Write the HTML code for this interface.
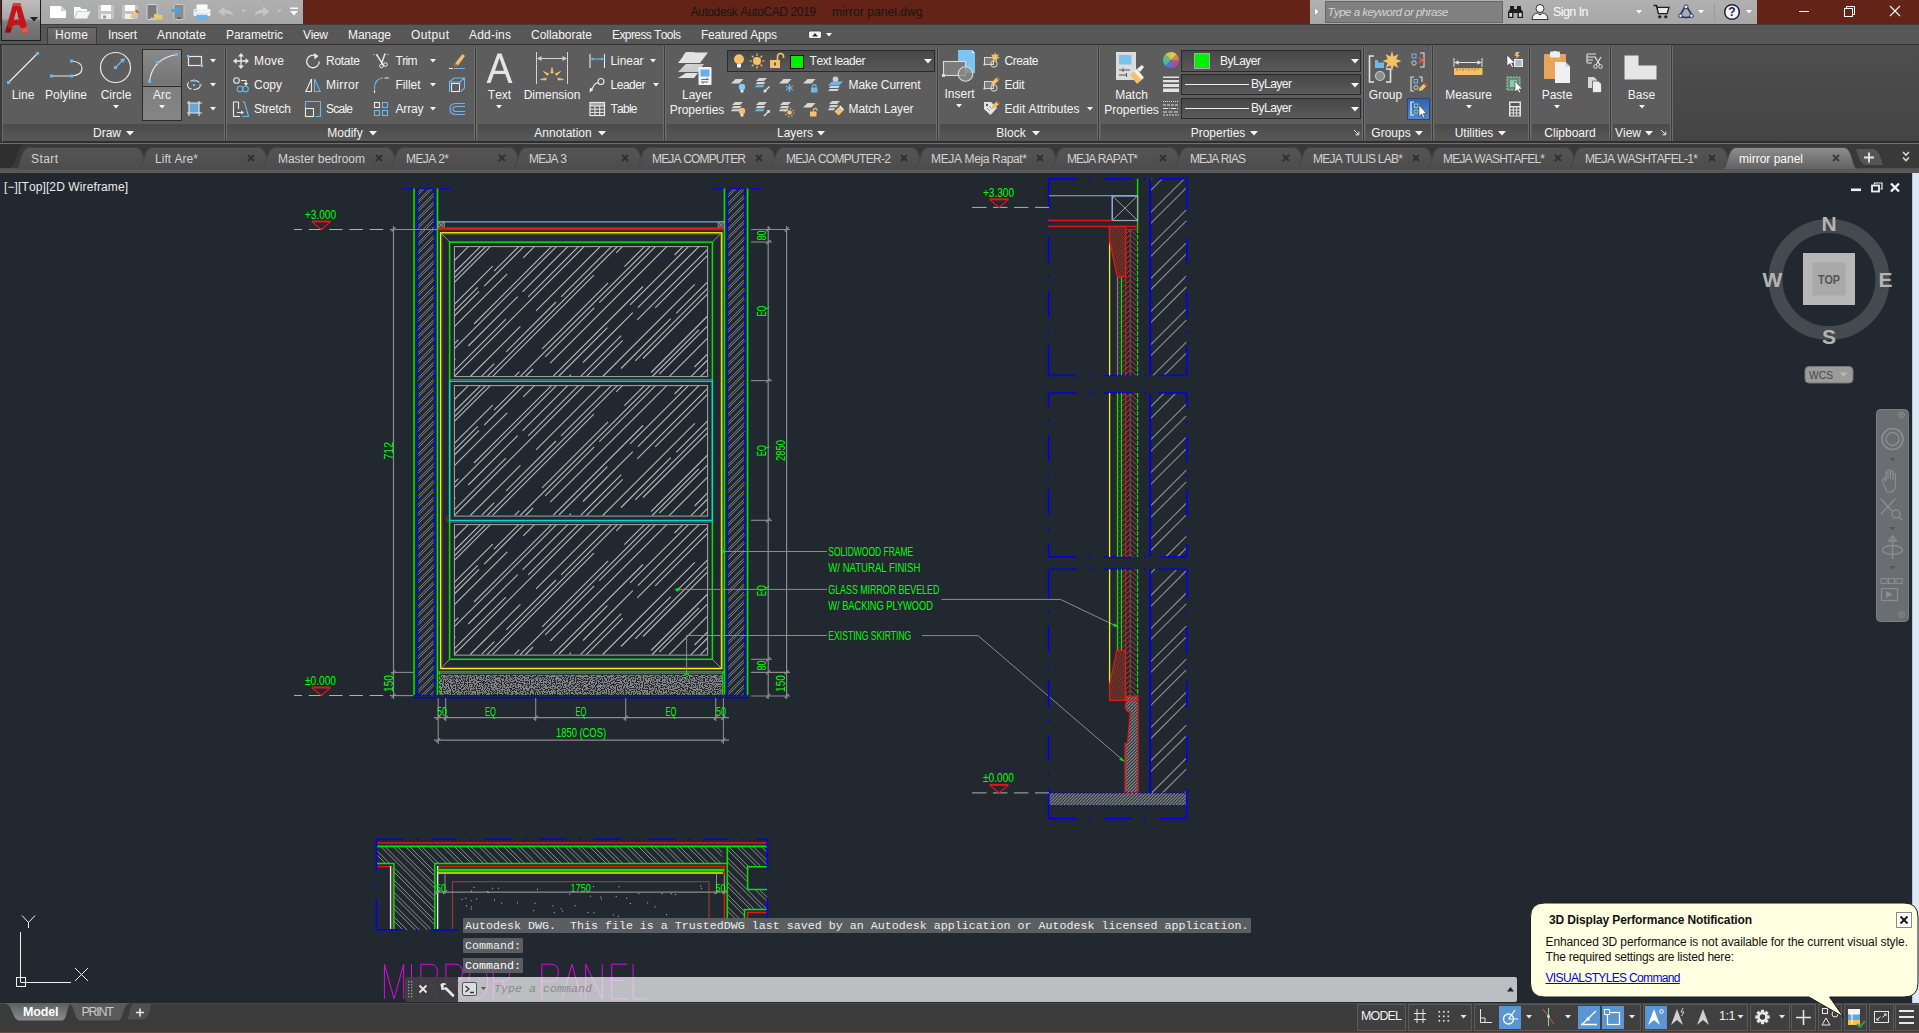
<!DOCTYPE html><html><head><meta charset="utf-8"><title>AutoCAD</title><style>
html,body{margin:0;padding:0;}
body{width:1919px;height:1033px;overflow:hidden;position:relative;background:#212830;font-family:"Liberation Sans",sans-serif;}
div,svg{position:absolute;box-sizing:border-box;}
.t{white-space:nowrap;line-height:1.2;font-kerning:none;}
svg{overflow:visible;}
</style></head><body>
<svg style="left:0;top:0" width="1919" height="1033" viewBox="0 0 1919 1033"><defs>
<pattern id="wh" width="4" height="4" patternUnits="userSpaceOnUse"><path d="M-1 5 L5 -1 M-1 1 L1 -1 M3 5 L5 3" stroke="#8f8f8f" stroke-width="1"/></pattern>
<pattern id="ph" width="4.6" height="4.6" patternUnits="userSpaceOnUse"><path d="M-1 -1 L5.6 5.6 M3.6 -1 L5.6 1 M-1 3.6 L1 5.6" stroke="#909090" stroke-width=".75"/></pattern>
<pattern id="fh" width="3.2" height="3.2" patternUnits="userSpaceOnUse"><path d="M-1 4.2 L4.2 -1 M-1 1 L1 -1 M2.2 4.2 L4.2 2.2" stroke="#9a9a9a" stroke-width="1"/></pattern>
<pattern id="rh" width="2.4" height="2.4" patternUnits="userSpaceOnUse"><rect width="2.4" height="2.4" fill="#44231f"/><path d="M-1 3.4 L3.4 -1 M-1 1 L1 -1 M1.4 3.4 L3.4 1.4" stroke="#a84636" stroke-width=".75"/></pattern>
<pattern id="hb" x="1125.8" y="0" width="5.8" height="3.4" patternUnits="userSpaceOnUse"><path d="M0 5 L2.9 0 L5.8 5 M0 1.6 L2.9 -3.4 L5.8 1.6 M0 8.4 L2.9 3.4 L5.8 8.4" stroke="#a44638" stroke-width=".75" fill="none"/></pattern>
<filter id="nz" x="0" y="0" width="100%" height="100%" color-interpolation-filters="sRGB"><feTurbulence type="fractalNoise" baseFrequency="0.85" numOctaves="1" seed="11"/><feColorMatrix type="matrix" values="0 0 0 0 .13  0 0 0 0 .157  0 0 0 0 .19  14 0 0 0 -6.8"/></filter>
</defs>
<path d="M417.8 192.51L421.31 189M417.8 195.01L423.81 189M417.8 200.95L429.75 189M417.8 203.45L432.25 189M417.8 209.39L434.2 192.99M417.8 211.89L434.2 195.49M417.8 217.83L434.2 201.43M417.8 220.33L434.2 203.93M417.8 226.27L434.2 209.87M417.8 228.77L434.2 212.37M417.8 234.71L434.2 218.31M417.8 237.21L434.2 220.81M417.8 243.15L434.2 226.75M417.8 245.65L434.2 229.25M417.8 251.59L434.2 235.19M417.8 254.09L434.2 237.69M417.8 260.03L434.2 243.63M417.8 262.53L434.2 246.13M417.8 268.47L434.2 252.07M417.8 270.97L434.2 254.57M417.8 276.91L434.2 260.51M417.8 279.41L434.2 263.01M417.8 285.35L434.2 268.95M417.8 287.85L434.2 271.45M417.8 293.79L434.2 277.39M417.8 296.29L434.2 279.89M417.8 302.23L434.2 285.83M417.8 304.73L434.2 288.33M417.8 310.67L434.2 294.27M417.8 313.17L434.2 296.77M417.8 319.11L434.2 302.71M417.8 321.61L434.2 305.21M417.8 327.55L434.2 311.15M417.8 330.05L434.2 313.65M417.8 335.99L434.2 319.59M417.8 338.49L434.2 322.09M417.8 344.43L434.2 328.03M417.8 346.93L434.2 330.53M417.8 352.87L434.2 336.47M417.8 355.37L434.2 338.97M417.8 361.31L434.2 344.91M417.8 363.81L434.2 347.41M417.8 369.75L434.2 353.35M417.8 372.25L434.2 355.85M417.8 378.19L434.2 361.79M417.8 380.69L434.2 364.29M417.8 386.63L434.2 370.23M417.8 389.13L434.2 372.73M417.8 395.07L434.2 378.67M417.8 397.57L434.2 381.17M417.8 403.51L434.2 387.11M417.8 406.01L434.2 389.61M417.8 411.95L434.2 395.55M417.8 414.45L434.2 398.05M417.8 420.39L434.2 403.99M417.8 422.89L434.2 406.49M417.8 428.83L434.2 412.43M417.8 431.33L434.2 414.93M417.8 437.27L434.2 420.87M417.8 439.77L434.2 423.37M417.8 445.71L434.2 429.31M417.8 448.21L434.2 431.81M417.8 454.15L434.2 437.75M417.8 456.65L434.2 440.25M417.8 462.59L434.2 446.19M417.8 465.09L434.2 448.69M417.8 471.03L434.2 454.63M417.8 473.53L434.2 457.13M417.8 479.47L434.2 463.07M417.8 481.97L434.2 465.57M417.8 487.91L434.2 471.51M417.8 490.41L434.2 474.01M417.8 496.35L434.2 479.95M417.8 498.85L434.2 482.45M417.8 504.79L434.2 488.39M417.8 507.29L434.2 490.89M417.8 513.23L434.2 496.83M417.8 515.73L434.2 499.33M417.8 521.67L434.2 505.27M417.8 524.17L434.2 507.77M417.8 530.11L434.2 513.71M417.8 532.61L434.2 516.21M417.8 538.55L434.2 522.15M417.8 541.05L434.2 524.65M417.8 546.99L434.2 530.59M417.8 549.49L434.2 533.09M417.8 555.43L434.2 539.03M417.8 557.93L434.2 541.53M417.8 563.87L434.2 547.47M417.8 566.37L434.2 549.97M417.8 572.31L434.2 555.91M417.8 574.81L434.2 558.41M417.8 580.75L434.2 564.35M417.8 583.25L434.2 566.85M417.8 589.19L434.2 572.79M417.8 591.69L434.2 575.29M417.8 597.63L434.2 581.23M417.8 600.13L434.2 583.73M417.8 606.07L434.2 589.67M417.8 608.57L434.2 592.17M417.8 614.51L434.2 598.11M417.8 617.01L434.2 600.61M417.8 622.95L434.2 606.55M417.8 625.45L434.2 609.05M417.8 631.39L434.2 614.99M417.8 633.89L434.2 617.49M417.8 639.83L434.2 623.43M417.8 642.33L434.2 625.93M417.8 648.27L434.2 631.87M417.8 650.77L434.2 634.37M417.8 656.71L434.2 640.31M417.8 659.21L434.2 642.81M417.8 665.15L434.2 648.75M417.8 667.65L434.2 651.25M417.8 673.59L434.2 657.19M417.8 676.09L434.2 659.69M417.8 682.03L434.2 665.63M417.8 684.53L434.2 668.13M417.8 690.47L434.2 674.07M417.8 692.97L434.2 676.57M420.71 696L434.2 682.51M423.21 696L434.2 685.01M429.15 696L434.2 690.95M431.65 696L434.2 693.45" stroke="#8c8c8c" stroke-width=".95" fill="none"/>
<path d="M414 188.5 L414 696" stroke="#00e400" stroke-width="1.6" />
<path d="M437.5 188.5 L437.5 696" stroke="#00e400" stroke-width="1.6" />
<path d="M417.5 189 V696 M434.5 189 V696" stroke="#0000ee" stroke-width="1.5" stroke-dasharray="7.5 .9 .9 .9"/>
<path d="M727.8 194.79L733.59 189M727.8 197.29L736.09 189M727.8 203.23L742.03 189M727.8 205.73L744.4 189.13M727.8 211.67L744.4 195.07M727.8 214.17L744.4 197.57M727.8 220.11L744.4 203.51M727.8 222.61L744.4 206.01M727.8 228.55L744.4 211.95M727.8 231.05L744.4 214.45M727.8 236.99L744.4 220.39M727.8 239.49L744.4 222.89M727.8 245.43L744.4 228.83M727.8 247.93L744.4 231.33M727.8 253.87L744.4 237.27M727.8 256.37L744.4 239.77M727.8 262.31L744.4 245.71M727.8 264.81L744.4 248.21M727.8 270.75L744.4 254.15M727.8 273.25L744.4 256.65M727.8 279.19L744.4 262.59M727.8 281.69L744.4 265.09M727.8 287.63L744.4 271.03M727.8 290.13L744.4 273.53M727.8 296.07L744.4 279.47M727.8 298.57L744.4 281.97M727.8 304.51L744.4 287.91M727.8 307.01L744.4 290.41M727.8 312.95L744.4 296.35M727.8 315.45L744.4 298.85M727.8 321.39L744.4 304.79M727.8 323.89L744.4 307.29M727.8 329.83L744.4 313.23M727.8 332.33L744.4 315.73M727.8 338.27L744.4 321.67M727.8 340.77L744.4 324.17M727.8 346.71L744.4 330.11M727.8 349.21L744.4 332.61M727.8 355.15L744.4 338.55M727.8 357.65L744.4 341.05M727.8 363.59L744.4 346.99M727.8 366.09L744.4 349.49M727.8 372.03L744.4 355.43M727.8 374.53L744.4 357.93M727.8 380.47L744.4 363.87M727.8 382.97L744.4 366.37M727.8 388.91L744.4 372.31M727.8 391.41L744.4 374.81M727.8 397.35L744.4 380.75M727.8 399.85L744.4 383.25M727.8 405.79L744.4 389.19M727.8 408.29L744.4 391.69M727.8 414.23L744.4 397.63M727.8 416.73L744.4 400.13M727.8 422.67L744.4 406.07M727.8 425.17L744.4 408.57M727.8 431.11L744.4 414.51M727.8 433.61L744.4 417.01M727.8 439.55L744.4 422.95M727.8 442.05L744.4 425.45M727.8 447.99L744.4 431.39M727.8 450.49L744.4 433.89M727.8 456.43L744.4 439.83M727.8 458.93L744.4 442.33M727.8 464.87L744.4 448.27M727.8 467.37L744.4 450.77M727.8 473.31L744.4 456.71M727.8 475.81L744.4 459.21M727.8 481.75L744.4 465.15M727.8 484.25L744.4 467.65M727.8 490.19L744.4 473.59M727.8 492.69L744.4 476.09M727.8 498.63L744.4 482.03M727.8 501.13L744.4 484.53M727.8 507.07L744.4 490.47M727.8 509.57L744.4 492.97M727.8 515.51L744.4 498.91M727.8 518.01L744.4 501.41M727.8 523.95L744.4 507.35M727.8 526.45L744.4 509.85M727.8 532.39L744.4 515.79M727.8 534.89L744.4 518.29M727.8 540.83L744.4 524.23M727.8 543.33L744.4 526.73M727.8 549.27L744.4 532.67M727.8 551.77L744.4 535.17M727.8 557.71L744.4 541.11M727.8 560.21L744.4 543.61M727.8 566.15L744.4 549.55M727.8 568.65L744.4 552.05M727.8 574.59L744.4 557.99M727.8 577.09L744.4 560.49M727.8 583.03L744.4 566.43M727.8 585.53L744.4 568.93M727.8 591.47L744.4 574.87M727.8 593.97L744.4 577.37M727.8 599.91L744.4 583.31M727.8 602.41L744.4 585.81M727.8 608.35L744.4 591.75M727.8 610.85L744.4 594.25M727.8 616.79L744.4 600.19M727.8 619.29L744.4 602.69M727.8 625.23L744.4 608.63M727.8 627.73L744.4 611.13M727.8 633.67L744.4 617.07M727.8 636.17L744.4 619.57M727.8 642.11L744.4 625.51M727.8 644.61L744.4 628.01M727.8 650.55L744.4 633.95M727.8 653.05L744.4 636.45M727.8 658.99L744.4 642.39M727.8 661.49L744.4 644.89M727.8 667.43L744.4 650.83M727.8 669.93L744.4 653.33M727.8 675.87L744.4 659.27M727.8 678.37L744.4 661.77M727.8 684.31L744.4 667.71M727.8 686.81L744.4 670.21M727.8 692.75L744.4 676.15M727.8 695.25L744.4 678.65M732.99 696L744.4 684.59M735.49 696L744.4 687.09M741.43 696L744.4 693.03M743.93 696L744.4 695.53" stroke="#8c8c8c" stroke-width=".95" fill="none"/>
<path d="M724.4 188.5 L724.4 696" stroke="#00e400" stroke-width="1.6" />
<path d="M747.6 188.5 L747.6 696" stroke="#00e400" stroke-width="1.6" />
<path d="M727.5 189 V696 M744.7 189 V696" stroke="#0000ee" stroke-width="1.5" stroke-dasharray="7.5 .9 .9 .9"/>
<path d="M403 188.6 L413 188.6" stroke="#0000ee" stroke-width="1.4" stroke-dasharray="3 .6"/>
<path d="M421 188.6 L433 188.6" stroke="#0000ee" stroke-width="1.4" stroke-dasharray="3 .6"/>
<path d="M440 188.6 L451 188.6" stroke="#0000ee" stroke-width="1.4" stroke-dasharray="3 .6"/>
<path d="M713 188.6 L723 188.6" stroke="#0000ee" stroke-width="1.4" stroke-dasharray="3 .6"/>
<path d="M730 188.6 L743 188.6" stroke="#0000ee" stroke-width="1.4" stroke-dasharray="3 .6"/>
<path d="M750 188.6 L761 188.6" stroke="#0000ee" stroke-width="1.4" stroke-dasharray="3 .6"/>
<path d="M413.5 695.4 L748.5 695.4" stroke="#0000ee" stroke-width="1.4" stroke-dasharray="3.5 1.2"/>
<path d="M413.5 697.8 L748.5 697.8" stroke="#0000ee" stroke-width="1.6" />
<path d="M437.5 221.8 L724.5 221.8" stroke="#7ea6d8" stroke-width="1.2" />
<rect x="438" y="222" width="6.3" height="6" fill="#4a4f55" stroke="#a0a0a0" stroke-width=".8"/><path d="M438 222 l6.3 6 M444.3 222 l-6.3 6" stroke="#a0a0a0" stroke-width=".7"/>
<rect x="718.2" y="222" width="6.3" height="6" fill="#4a4f55" stroke="#a0a0a0" stroke-width=".8"/><path d="M718.2 222 l6.3 6 M724.5 222 l-6.3 6" stroke="#a0a0a0" stroke-width=".7"/>
<rect x="438.5" y="227.2" width="285" height="3" fill="#e61414"/>
<rect x="440.6" y="232.8" width="281.2" height="435.8" fill="none" stroke="#f4f400" stroke-width="1.4"/>
<rect x="442" y="234.2" width="278.4" height="433" fill="none" stroke="#6a6a6a" stroke-width=".6"/>
<path d="M441 233 L449.6 242" stroke="#9a9a9a" stroke-width="0.9" />
<path d="M721.5 233 L712.4 242" stroke="#9a9a9a" stroke-width="0.9" />
<path d="M441 668.5 L449.6 659.3" stroke="#9a9a9a" stroke-width="0.9" />
<path d="M721.5 668.5 L712.4 659.3" stroke="#9a9a9a" stroke-width="0.9" />
<rect x="449.6" y="242.1" width="262.8" height="417.2" fill="none" stroke="#00e400" stroke-width="1.5"/>
<rect x="449.6" y="381.3" width="262.8" height="139.1" fill="none" stroke="#00dcdc" stroke-width="1.3"/>
<path d="M450 379.6 L712 379.6" stroke="#8a8a8a" stroke-width="0.8" />
<path d="M450 522 L712 522" stroke="#8a8a8a" stroke-width="0.8" />
<g id="glass" transform="translate(454.4 246.6)"><path d="M0 13.9L13.9 0M0 25.9L25.9 0M0 31.2L31.2 0M0 35.8L35.8 0M0 57.8L38.3 19.5M0 64.2L23.4 40.8M39.6 24.6L64.2 0M0 69.4L24.7 44.7M29.8 39.6L69.4 0M0 80L52.8 27.2M68.8 11.2L80 0M0 97L4 93M19.6 77.4L97 0M0 102L102 0M0 113.3L1 112.3M13.9 99.4L63.3 50M68.1 45.2L113.3 0M0 124L51.5 72.5M73.8 50.2L124 0M0 129.7L129.7 0M15.9 129.9L66 79.8M81.6 64.2L145.8 0M27.4 129.6L39.9 117.1M51.8 105.2L101.6 55.4M106.7 50.3L157 0M32.8 130L162.8 0M38.3 129.7L139.5 28.5M161.8 6.2L168 0M60.3 129.7L65 125M87.7 102.3L153.7 36.3M170 20L190 0M65.7 130L195.7 0M71.1 129.9L78.6 122.4M90.8 110.2L139.8 61.2M144.9 56.1L201 0M95.8 116.5L212.3 0M98.9 129.6L188.6 39.9M220.1 8.4L228.5 0M104.6 129.4L153 81M175.7 58.3L234 0M115 129.5L116.5 128M128.6 115.9L178.4 66.1M183.5 61L244.5 0M126.3 129.7L166.9 89.1M182.8 73.2L253.2 2.8M132 130L168.3 93.7M200.8 61.2L253.2 8.8M148.3 129.9L240.4 37.8M166.6 121.9L216.4 72.1M221.8 66.7L253.2 35.3M180.8 114.2L253.2 41.8M188.6 111.9L253.2 47.3M196.7 125.9L253.2 69.4M197.8 129.9L244.5 83.2M204.9 127.6L253.2 79.3M214.8 130L253.2 91.6M240.1 120.4L253.2 107.3M236.6 130L253.2 113.4M246 130L253.2 122.8" stroke="#b6b6b6" stroke-width="1.15" fill="none"/><rect x="0" y="0" width="253.2" height="130" fill="none" stroke="#a8a8a8" stroke-width="1"/></g>
<g transform="translate(454.4 385.6)"><path d="M0 13.9L13.9 0M0 25.9L25.9 0M0 31.2L31.2 0M0 35.8L35.8 0M0 57.8L38.3 19.5M0 64.2L23.4 40.8M39.6 24.6L64.2 0M0 69.4L24.7 44.7M29.8 39.6L69.4 0M0 80L52.8 27.2M68.8 11.2L80 0M0 97L4 93M19.6 77.4L97 0M0 102L102 0M0 113.3L1 112.3M13.9 99.4L63.3 50M68.1 45.2L113.3 0M0 124L51.5 72.5M73.8 50.2L124 0M0 129.7L129.7 0M15.9 129.9L66 79.8M81.6 64.2L145.8 0M27.4 129.6L39.9 117.1M51.8 105.2L101.6 55.4M106.7 50.3L157 0M32.8 130L162.8 0M38.3 129.7L139.5 28.5M161.8 6.2L168 0M60.3 129.7L65 125M87.7 102.3L153.7 36.3M170 20L190 0M65.7 130L195.7 0M71.1 129.9L78.6 122.4M90.8 110.2L139.8 61.2M144.9 56.1L201 0M95.8 116.5L212.3 0M98.9 129.6L188.6 39.9M220.1 8.4L228.5 0M104.6 129.4L153 81M175.7 58.3L234 0M115 129.5L116.5 128M128.6 115.9L178.4 66.1M183.5 61L244.5 0M126.3 129.7L166.9 89.1M182.8 73.2L253.2 2.8M132 130L168.3 93.7M200.8 61.2L253.2 8.8M148.3 129.9L240.4 37.8M166.6 121.9L216.4 72.1M221.8 66.7L253.2 35.3M180.8 114.2L253.2 41.8M188.6 111.9L253.2 47.3M196.7 125.9L253.2 69.4M197.8 129.9L244.5 83.2M204.9 127.6L253.2 79.3M214.8 130L253.2 91.6M240.1 120.4L253.2 107.3M236.6 130L253.2 113.4M246 130L253.2 122.8" stroke="#b6b6b6" stroke-width="1.15" fill="none"/><rect x="0" y="0" width="253.2" height="130.5" fill="none" stroke="#a8a8a8" stroke-width="1"/></g>
<g transform="translate(454.4 524.6)"><path d="M0 13.9L13.9 0M0 25.9L25.9 0M0 31.2L31.2 0M0 35.8L35.8 0M0 57.8L38.3 19.5M0 64.2L23.4 40.8M39.6 24.6L64.2 0M0 69.4L24.7 44.7M29.8 39.6L69.4 0M0 80L52.8 27.2M68.8 11.2L80 0M0 97L4 93M19.6 77.4L97 0M0 102L102 0M0 113.3L1 112.3M13.9 99.4L63.3 50M68.1 45.2L113.3 0M0 124L51.5 72.5M73.8 50.2L124 0M0 129.7L129.7 0M15.9 129.9L66 79.8M81.6 64.2L145.8 0M27.4 129.6L39.9 117.1M51.8 105.2L101.6 55.4M106.7 50.3L157 0M32.8 130L162.8 0M38.3 129.7L139.5 28.5M161.8 6.2L168 0M60.3 129.7L65 125M87.7 102.3L153.7 36.3M170 20L190 0M65.7 130L195.7 0M71.1 129.9L78.6 122.4M90.8 110.2L139.8 61.2M144.9 56.1L201 0M95.8 116.5L212.3 0M98.9 129.6L188.6 39.9M220.1 8.4L228.5 0M104.6 129.4L153 81M175.7 58.3L234 0M115 129.5L116.5 128M128.6 115.9L178.4 66.1M183.5 61L244.5 0M126.3 129.7L166.9 89.1M182.8 73.2L253.2 2.8M132 130L168.3 93.7M200.8 61.2L253.2 8.8M148.3 129.9L240.4 37.8M166.6 121.9L216.4 72.1M221.8 66.7L253.2 35.3M180.8 114.2L253.2 41.8M188.6 111.9L253.2 47.3M196.7 125.9L253.2 69.4M197.8 129.9L244.5 83.2M204.9 127.6L253.2 79.3M214.8 130L253.2 91.6M240.1 120.4L253.2 107.3M236.6 130L253.2 113.4M246 130L253.2 122.8" stroke="#b6b6b6" stroke-width="1.15" fill="none"/><rect x="0" y="0" width="253.2" height="130.5" fill="none" stroke="#a8a8a8" stroke-width="1"/></g>
<rect x="440" y="675.5" width="283" height="19.3" fill="#858585"/>
<rect x="440" y="675.5" width="283" height="19.3" filter="url(#nz)"/>
<path d="M438 671.7 L724 671.7" stroke="#00e400" stroke-width="1.1" />
<path d="M438 673.1 L724 673.1" stroke="#8a8a8a" stroke-width="1" />
<path d="M441 675.4 L723 675.4" stroke="#00e400" stroke-width="1" stroke-dasharray="4 2.5"/>
<path d="M439.6 672 V695 M722.6 672 V695" stroke="#00e400" stroke-width="1.2" stroke-dasharray="3 1.5"/>
<path d="M449 515 L446 519 L449 523" stroke="#c03030" stroke-width=".8" fill="none"/>
<path d="M294 229.5 L393 229.5" stroke="#b0b0b0" stroke-width="1" stroke-dasharray="13.5 6.8" stroke-dashoffset="5.5"/>
<path d="M311.7 221.5 H330.7" stroke="#e61414" stroke-width="2"/><path d="M312.2 222.0 L321.2 229.5 L330.2 222.0" stroke="#e61414" stroke-width="1.2" fill="none"/><text x="305" y="219" font-size="12.57" fill="#00ff00" text-anchor="start" textLength="31" lengthAdjust="spacingAndGlyphs" font-family="Liberation Sans">+3.000</text>
<path d="M294 695.5 L413 695.5" stroke="#b0b0b0" stroke-width="1" stroke-dasharray="13.5 6.8" stroke-dashoffset="5.5"/>
<path d="M311.7 687.5 H330.7" stroke="#e61414" stroke-width="2"/><path d="M312.2 688.0 L321.2 695.5 L330.2 688.0" stroke="#e61414" stroke-width="1.2" fill="none"/><text x="305" y="685" font-size="12.57" fill="#00ff00" text-anchor="start" textLength="31" lengthAdjust="spacingAndGlyphs" font-family="Liberation Sans">&#177;0.000</text>
<path d="M393.5 226 L393.5 699" stroke="#8c8c8c" stroke-width="1.2" />
<path d="M391 229.5 L437 229.5" stroke="#8c8c8c" stroke-width="1.1" />
<path d="M391 672.4 L413 672.4" stroke="#8c8c8c" stroke-width="1.1" />
<path d="M391 695.6 L413 695.6" stroke="#8c8c8c" stroke-width="1.1" />
<path d="M391.5 231.5 L395.5 227.5" stroke="#8c8c8c" stroke-width="1.3" />
<path d="M391.5 674.4 L395.5 670.4" stroke="#8c8c8c" stroke-width="1.3" />
<path d="M391.5 697.6 L395.5 693.6" stroke="#8c8c8c" stroke-width="1.3" />
<text x="392.7" y="459.5" font-size="12.57" fill="#00ff00" text-anchor="start" textLength="17.5" lengthAdjust="spacingAndGlyphs" font-family="Liberation Sans" transform="rotate(-90 392.7 459.5)">712</text>
<text x="392.7" y="692" font-size="12.57" fill="#00ff00" text-anchor="start" textLength="17" lengthAdjust="spacingAndGlyphs" font-family="Liberation Sans" transform="rotate(-90 392.7 692)">150</text>
<path d="M768.2 226 L768.2 699" stroke="#8c8c8c" stroke-width="1.2" />
<path d="M786.6 226 L786.6 699" stroke="#8c8c8c" stroke-width="1.2" />
<path d="M751 229.5 L790 229.5" stroke="#8c8c8c" stroke-width="1.1" />
<path d="M751 696 L790 696" stroke="#8c8c8c" stroke-width="1.1" />
<path d="M751 672.4 L790 672.4" stroke="#8c8c8c" stroke-width="1.1" />
<path d="M751 242 L772 242" stroke="#8c8c8c" stroke-width="1.1" />
<path d="M751 380.6 L772 380.6" stroke="#8c8c8c" stroke-width="1.1" />
<path d="M751 520.3 L772 520.3" stroke="#8c8c8c" stroke-width="1.1" />
<path d="M751 659.3 L772 659.3" stroke="#8c8c8c" stroke-width="1.1" />
<path d="M766.2 231.5 L770.2 227.5" stroke="#8c8c8c" stroke-width="1.3" />
<path d="M766.2 244 L770.2 240" stroke="#8c8c8c" stroke-width="1.3" />
<path d="M766.2 382.6 L770.2 378.6" stroke="#8c8c8c" stroke-width="1.3" />
<path d="M766.2 522.3 L770.2 518.3" stroke="#8c8c8c" stroke-width="1.3" />
<path d="M766.2 661.3 L770.2 657.3" stroke="#8c8c8c" stroke-width="1.3" />
<path d="M766.2 674.4 L770.2 670.4" stroke="#8c8c8c" stroke-width="1.3" />
<path d="M766.2 698 L770.2 694" stroke="#8c8c8c" stroke-width="1.3" />
<path d="M784.6 231.5 L788.6 227.5" stroke="#8c8c8c" stroke-width="1.3" />
<path d="M784.6 674.4 L788.6 670.4" stroke="#8c8c8c" stroke-width="1.3" />
<path d="M784.6 698 L788.6 694" stroke="#8c8c8c" stroke-width="1.3" />
<text x="765.8" y="240.5" font-size="12.57" fill="#00ff00" text-anchor="start" textLength="10" lengthAdjust="spacingAndGlyphs" font-family="Liberation Sans" transform="rotate(-90 765.8 240.5)">80</text>
<text x="765.8" y="316.5" font-size="12.57" fill="#00ff00" text-anchor="start" textLength="11" lengthAdjust="spacingAndGlyphs" font-family="Liberation Sans" transform="rotate(-90 765.8 316.5)">EQ</text>
<text x="765.8" y="456" font-size="12.57" fill="#00ff00" text-anchor="start" textLength="11" lengthAdjust="spacingAndGlyphs" font-family="Liberation Sans" transform="rotate(-90 765.8 456)">EQ</text>
<text x="765.8" y="596" font-size="12.57" fill="#00ff00" text-anchor="start" textLength="11" lengthAdjust="spacingAndGlyphs" font-family="Liberation Sans" transform="rotate(-90 765.8 596)">EQ</text>
<text x="765.8" y="670.5" font-size="12.57" fill="#00ff00" text-anchor="start" textLength="10" lengthAdjust="spacingAndGlyphs" font-family="Liberation Sans" transform="rotate(-90 765.8 670.5)">80</text>
<text x="785" y="461" font-size="12.57" fill="#00ff00" text-anchor="start" textLength="21" lengthAdjust="spacingAndGlyphs" font-family="Liberation Sans" transform="rotate(-90 785 461)">2850</text>
<text x="785" y="692" font-size="12.57" fill="#00ff00" text-anchor="start" textLength="17" lengthAdjust="spacingAndGlyphs" font-family="Liberation Sans" transform="rotate(-90 785 692)">150</text>
<path d="M434 717.7 L729 717.7" stroke="#8c8c8c" stroke-width="1.2" />
<path d="M434 740.2 L729 740.2" stroke="#8c8c8c" stroke-width="1.2" />
<path d="M438.2 698 L438.2 744" stroke="#8c8c8c" stroke-width="1.1" />
<path d="M723.4 698 L723.4 744" stroke="#8c8c8c" stroke-width="1.1" />
<path d="M445.7 698 L445.7 721" stroke="#8c8c8c" stroke-width="1.1" />
<path d="M535.7 698 L535.7 721" stroke="#8c8c8c" stroke-width="1.1" />
<path d="M625.7 698 L625.7 721" stroke="#8c8c8c" stroke-width="1.1" />
<path d="M715.7 698 L715.7 721" stroke="#8c8c8c" stroke-width="1.1" />
<path d="M436.2 719.7 L440.2 715.7" stroke="#8c8c8c" stroke-width="1.3" />
<path d="M443.7 719.7 L447.7 715.7" stroke="#8c8c8c" stroke-width="1.3" />
<path d="M533.7 719.7 L537.7 715.7" stroke="#8c8c8c" stroke-width="1.3" />
<path d="M623.7 719.7 L627.7 715.7" stroke="#8c8c8c" stroke-width="1.3" />
<path d="M713.7 719.7 L717.7 715.7" stroke="#8c8c8c" stroke-width="1.3" />
<path d="M721.4 719.7 L725.4 715.7" stroke="#8c8c8c" stroke-width="1.3" />
<path d="M436.2 742.2 L440.2 738.2" stroke="#8c8c8c" stroke-width="1.3" />
<path d="M721.4 742.2 L725.4 738.2" stroke="#8c8c8c" stroke-width="1.3" />
<text x="437" y="716" font-size="12.57" fill="#00ff00" text-anchor="start" textLength="10" lengthAdjust="spacingAndGlyphs" font-family="Liberation Sans">50</text>
<text x="716" y="716" font-size="12.57" fill="#00ff00" text-anchor="start" textLength="10" lengthAdjust="spacingAndGlyphs" font-family="Liberation Sans">50</text>
<text x="485" y="716" font-size="12.57" fill="#00ff00" text-anchor="start" textLength="11" lengthAdjust="spacingAndGlyphs" font-family="Liberation Sans">EQ</text>
<text x="575.5" y="716" font-size="12.57" fill="#00ff00" text-anchor="start" textLength="11" lengthAdjust="spacingAndGlyphs" font-family="Liberation Sans">EQ</text>
<text x="665.5" y="716" font-size="12.57" fill="#00ff00" text-anchor="start" textLength="11" lengthAdjust="spacingAndGlyphs" font-family="Liberation Sans">EQ</text>
<text x="556" y="737" font-size="12.57" fill="#00ff00" text-anchor="start" textLength="50" lengthAdjust="spacingAndGlyphs" font-family="Liberation Sans">1850 (COS)</text>
<path d="M723.5 551.5 L827 551.5" stroke="#8c8c8c" stroke-width="1" />
<circle cx="723.5" cy="551.5" r="1.6" fill="#00e400"/>
<path d="M676 589.4 L827 589.4" stroke="#8c8c8c" stroke-width="1" />
<path d="M674 589.4 L679.5 587.6 V591.2 Z" fill="#00e400"/>
<path d="M686.6 674 L686.6 635.5 L827 635.5" stroke="#8c8c8c" stroke-width="1" fill="none" />
<path d="M684 674.2 H689" stroke="#00e400" stroke-width="1.4"/>
<path d="M941.5 599.4 L1060.5 599.4 L1118 627" stroke="#8c8c8c" stroke-width="1" fill="none" />
<path d="M1119 627.5 L1112.8 626.3 L1114.3 623.3 Z" fill="#00e400"/>
<path d="M922 635.6 L978 635.6 L1124.5 761.5" stroke="#8c8c8c" stroke-width="1" fill="none" />
<path d="M1125.2 762 L1119.2 759.8 L1121.4 757.2 Z" fill="#00e400"/>
<text x="828.3" y="556" font-size="12.57" fill="#00ff00" text-anchor="start" textLength="85" lengthAdjust="spacingAndGlyphs" font-family="Liberation Sans">SOLIDWOOD FRAME</text>
<text x="828.3" y="572" font-size="12.57" fill="#00ff00" text-anchor="start" textLength="92" lengthAdjust="spacingAndGlyphs" font-family="Liberation Sans">W/ NATURAL FINISH</text>
<text x="828.3" y="594" font-size="12.57" fill="#00ff00" text-anchor="start" textLength="111" lengthAdjust="spacingAndGlyphs" font-family="Liberation Sans">GLASS MIRROR BEVELED</text>
<text x="828.3" y="610" font-size="12.57" fill="#00ff00" text-anchor="start" textLength="104.5" lengthAdjust="spacingAndGlyphs" font-family="Liberation Sans">W/ BACKING PLYWOOD</text>
<text x="828.3" y="640" font-size="12.57" fill="#00ff00" text-anchor="start" textLength="83" lengthAdjust="spacingAndGlyphs" font-family="Liberation Sans">EXISTING SKIRTING</text>
<path d="M1150.5 179.6L1151.4 178.7M1150.5 190.6L1162.4 178.7M1150.5 212.65L1184.45 178.7M1150.5 223.65L1186.3 187.85M1150.5 245.7L1186.3 209.9M1150.5 256.7L1186.3 220.9M1150.5 278.75L1186.3 242.95M1150.5 289.75L1186.3 253.95M1150.5 311.8L1186.3 276M1150.5 322.8L1186.3 287M1150.5 344.85L1186.3 309.05M1150.5 355.85L1186.3 320.05M1153 375.4L1186.3 342.1M1164 375.4L1186.3 353.1M1186.05 375.4L1186.3 375.15M1150.5 406.85L1164.35 393M1150.5 418.55L1176.05 393M1150.5 439.9L1186.3 404.1M1150.5 451.6L1186.3 415.8M1150.5 472.95L1186.3 437.15M1150.5 484.65L1186.3 448.85M1150.5 506L1186.3 470.2M1150.5 517.7L1186.3 481.9M1150.5 539.05L1186.3 503.25M1150.5 550.75L1186.3 514.95M1165.6 557L1186.3 536.3M1177.3 557L1186.3 548M1150.5 573.5L1154.8 569.2M1150.5 595.75L1177.05 569.2M1150.5 606.55L1186.3 570.75M1150.5 628.8L1186.3 593M1150.5 639.6L1186.3 603.8M1150.5 661.85L1186.3 626.05M1150.5 672.65L1186.3 636.85M1150.5 694.9L1186.3 659.1M1150.5 705.7L1186.3 669.9M1150.5 727.95L1186.3 692.15M1150.5 738.75L1186.3 702.95M1150.5 761L1186.3 725.2M1150.5 771.8L1186.3 736M1151.55 793L1186.3 758.25M1162.35 793L1186.3 769.05M1184.6 793L1186.3 791.3" stroke="#8e8e8e" stroke-width="1.1" fill="none"/>

<path d="M1048.7 178.7 L1076.8 178.7" stroke="#0000ee" stroke-width="1.6" /><rect x="1089.8" y="177.79999999999998" width="1.8" height="1.8" fill="#0000ee"/><path d="M1104.2 178.7 L1131.6 178.7" stroke="#0000ee" stroke-width="1.6" /><rect x="1144" y="177.79999999999998" width="1.8" height="1.8" fill="#0000ee"/><path d="M1158.7 178.7 L1186.7 178.7" stroke="#0000ee" stroke-width="1.6" />
<path d="M1048.7 375.4 L1076.8 375.4" stroke="#0000ee" stroke-width="1.6" /><rect x="1089.8" y="374.5" width="1.8" height="1.8" fill="#0000ee"/><path d="M1104.2 375.4 L1131.6 375.4" stroke="#0000ee" stroke-width="1.6" /><rect x="1144" y="374.5" width="1.8" height="1.8" fill="#0000ee"/><path d="M1158.7 375.4 L1186.7 375.4" stroke="#0000ee" stroke-width="1.6" />
<path d="M1048.7 178.7 L1048.7 208.7" stroke="#0000ee" stroke-width="1.6" /><rect x="1047.8" y="221.7" width="1.8" height="1.8" fill="#0000ee"/><path d="M1048.7 236.4 L1048.7 262.9" stroke="#0000ee" stroke-width="1.6" /><rect x="1047.8" y="275.9" width="1.8" height="1.8" fill="#0000ee"/><path d="M1048.7 290.6 L1048.7 317.1" stroke="#0000ee" stroke-width="1.6" /><rect x="1047.8" y="330.1" width="1.8" height="1.8" fill="#0000ee"/><path d="M1048.7 344.8 L1048.7 375.4" stroke="#0000ee" stroke-width="1.6" />
<path d="M1186.7 178.7 L1186.7 209.7" stroke="#0000ee" stroke-width="1.6" /><rect x="1185.8" y="222.7" width="1.8" height="1.8" fill="#0000ee"/><path d="M1186.7 237.4 L1186.7 263.9" stroke="#0000ee" stroke-width="1.6" /><rect x="1185.8" y="276.9" width="1.8" height="1.8" fill="#0000ee"/><path d="M1186.7 291.6 L1186.7 318.1" stroke="#0000ee" stroke-width="1.6" /><rect x="1185.8" y="331.1" width="1.8" height="1.8" fill="#0000ee"/><path d="M1186.7 345.8 L1186.7 375.4" stroke="#0000ee" stroke-width="1.6" />
<path d="M1150.2 178.7 L1150.2 375.4" stroke="#0000ee" stroke-width="1.8" />

<path d="M1048.7 393 L1076.8 393" stroke="#0000ee" stroke-width="1.6" /><rect x="1089.8" y="392.1" width="1.8" height="1.8" fill="#0000ee"/><path d="M1104.2 393 L1131.6 393" stroke="#0000ee" stroke-width="1.6" /><rect x="1144" y="392.1" width="1.8" height="1.8" fill="#0000ee"/><path d="M1158.7 393 L1186.7 393" stroke="#0000ee" stroke-width="1.6" />
<path d="M1048.7 557 L1076.8 557" stroke="#0000ee" stroke-width="1.6" /><rect x="1089.8" y="556.1" width="1.8" height="1.8" fill="#0000ee"/><path d="M1104.2 557 L1131.6 557" stroke="#0000ee" stroke-width="1.6" /><rect x="1144" y="556.1" width="1.8" height="1.8" fill="#0000ee"/><path d="M1158.7 557 L1186.7 557" stroke="#0000ee" stroke-width="1.6" />
<path d="M1048.7 393 L1048.7 406.9" stroke="#0000ee" stroke-width="1.6" /><rect x="1047.8" y="419.9" width="1.8" height="1.8" fill="#0000ee"/><path d="M1048.7 434.6 L1048.7 461.1" stroke="#0000ee" stroke-width="1.6" /><rect x="1047.8" y="474.1" width="1.8" height="1.8" fill="#0000ee"/><path d="M1048.7 488.8 L1048.7 515.3" stroke="#0000ee" stroke-width="1.6" /><rect x="1047.8" y="528.3" width="1.8" height="1.8" fill="#0000ee"/><path d="M1048.7 543 L1048.7 557" stroke="#0000ee" stroke-width="1.6" />
<path d="M1186.7 393 L1186.7 407.9" stroke="#0000ee" stroke-width="1.6" /><rect x="1185.8" y="420.9" width="1.8" height="1.8" fill="#0000ee"/><path d="M1186.7 435.6 L1186.7 462.1" stroke="#0000ee" stroke-width="1.6" /><rect x="1185.8" y="475.1" width="1.8" height="1.8" fill="#0000ee"/><path d="M1186.7 489.8 L1186.7 516.3" stroke="#0000ee" stroke-width="1.6" /><rect x="1185.8" y="529.3" width="1.8" height="1.8" fill="#0000ee"/><path d="M1186.7 544 L1186.7 557" stroke="#0000ee" stroke-width="1.6" />
<path d="M1150.2 393 L1150.2 557" stroke="#0000ee" stroke-width="1.8" />

<path d="M1048.7 569.2 L1076.8 569.2" stroke="#0000ee" stroke-width="1.6" /><rect x="1089.8" y="568.3000000000001" width="1.8" height="1.8" fill="#0000ee"/><path d="M1104.2 569.2 L1131.6 569.2" stroke="#0000ee" stroke-width="1.6" /><rect x="1144" y="568.3000000000001" width="1.8" height="1.8" fill="#0000ee"/><path d="M1158.7 569.2 L1186.7 569.2" stroke="#0000ee" stroke-width="1.6" />
<path d="M1048.7 818.6 L1076.8 818.6" stroke="#0000ee" stroke-width="1.6" /><rect x="1089.8" y="817.7" width="1.8" height="1.8" fill="#0000ee"/><path d="M1104.2 818.6 L1131.6 818.6" stroke="#0000ee" stroke-width="1.6" /><rect x="1144" y="817.7" width="1.8" height="1.8" fill="#0000ee"/><path d="M1158.7 818.6 L1186.7 818.6" stroke="#0000ee" stroke-width="1.6" />
<path d="M1048.7 569.2 L1048.7 598.4" stroke="#0000ee" stroke-width="1.6" /><rect x="1047.8" y="611.4" width="1.8" height="1.8" fill="#0000ee"/><path d="M1048.7 626.1 L1048.7 652.6" stroke="#0000ee" stroke-width="1.6" /><rect x="1047.8" y="665.6" width="1.8" height="1.8" fill="#0000ee"/><path d="M1048.7 680.3 L1048.7 706.8" stroke="#0000ee" stroke-width="1.6" /><rect x="1047.8" y="719.8" width="1.8" height="1.8" fill="#0000ee"/><path d="M1048.7 734.5 L1048.7 761" stroke="#0000ee" stroke-width="1.6" /><rect x="1047.8" y="774" width="1.8" height="1.8" fill="#0000ee"/><path d="M1048.7 788.7 L1048.7 818.6" stroke="#0000ee" stroke-width="1.6" />
<path d="M1186.7 569.2 L1186.7 599.4" stroke="#0000ee" stroke-width="1.6" /><rect x="1185.8" y="612.4" width="1.8" height="1.8" fill="#0000ee"/><path d="M1186.7 627.1 L1186.7 653.6" stroke="#0000ee" stroke-width="1.6" /><rect x="1185.8" y="666.6" width="1.8" height="1.8" fill="#0000ee"/><path d="M1186.7 681.3 L1186.7 707.8" stroke="#0000ee" stroke-width="1.6" /><rect x="1185.8" y="720.8" width="1.8" height="1.8" fill="#0000ee"/><path d="M1186.7 735.5 L1186.7 762" stroke="#0000ee" stroke-width="1.6" /><rect x="1185.8" y="775" width="1.8" height="1.8" fill="#0000ee"/><path d="M1186.7 789.7 L1186.7 818.6" stroke="#0000ee" stroke-width="1.6" />
<path d="M1150.2 569.2 L1150.2 793" stroke="#0000ee" stroke-width="1.8" />
<clipPath id="hc0"><rect x="1117.6" y="229" width="19.9" height="146.39999999999998"/></clipPath>
<clipPath id="hx0"><rect x="1117.6" y="276.5" width="4" height="98.89999999999998"/></clipPath>
<path clip-path="url(#hc0)" d="M1121.6 227.6L1130.2 220L1137.5 226.5M1121.6 232.6L1130.2 225L1137.5 231.5M1121.6 237.6L1130.2 230L1137.5 236.5M1121.6 242.6L1130.2 235L1137.5 241.5M1121.6 247.6L1130.2 240L1137.5 246.5M1121.6 252.6L1130.2 245L1137.5 251.5M1121.6 257.6L1130.2 250L1137.5 256.5M1121.6 262.6L1130.2 255L1137.5 261.5M1121.6 267.6L1130.2 260L1137.5 266.5M1121.6 272.6L1130.2 265L1137.5 271.5M1121.6 277.6L1130.2 270L1137.5 276.5M1121.6 282.6L1130.2 275L1137.5 281.5M1121.6 287.6L1130.2 280L1137.5 286.5M1121.6 292.6L1130.2 285L1137.5 291.5M1121.6 297.6L1130.2 290L1137.5 296.5M1121.6 302.6L1130.2 295L1137.5 301.5M1121.6 307.6L1130.2 300L1137.5 306.5M1121.6 312.6L1130.2 305L1137.5 311.5M1121.6 317.6L1130.2 310L1137.5 316.5M1121.6 322.6L1130.2 315L1137.5 321.5M1121.6 327.6L1130.2 320L1137.5 326.5M1121.6 332.6L1130.2 325L1137.5 331.5M1121.6 337.6L1130.2 330L1137.5 336.5M1121.6 342.6L1130.2 335L1137.5 341.5M1121.6 347.6L1130.2 340L1137.5 346.5M1121.6 352.6L1130.2 345L1137.5 351.5M1121.6 357.6L1130.2 350L1137.5 356.5M1121.6 362.6L1130.2 355L1137.5 361.5M1121.6 367.6L1130.2 360L1137.5 366.5M1121.6 372.6L1130.2 365L1137.5 371.5M1121.6 377.6L1130.2 370L1137.5 376.5M1121.6 382.6L1130.2 375L1137.5 381.5 M1130.2 229 V375.4" stroke="#a04638" stroke-width="1" fill="none"/>
<path clip-path="url(#hx0)" d="M1117.6 220L1121.5 225M1121.5 220L1117.6 225M1117.6 225L1121.5 230M1121.5 225L1117.6 230M1117.6 230L1121.5 235M1121.5 230L1117.6 235M1117.6 235L1121.5 240M1121.5 235L1117.6 240M1117.6 240L1121.5 245M1121.5 240L1117.6 245M1117.6 245L1121.5 250M1121.5 245L1117.6 250M1117.6 250L1121.5 255M1121.5 250L1117.6 255M1117.6 255L1121.5 260M1121.5 255L1117.6 260M1117.6 260L1121.5 265M1121.5 260L1117.6 265M1117.6 265L1121.5 270M1121.5 265L1117.6 270M1117.6 270L1121.5 275M1121.5 270L1117.6 275M1117.6 275L1121.5 280M1121.5 275L1117.6 280M1117.6 280L1121.5 285M1121.5 280L1117.6 285M1117.6 285L1121.5 290M1121.5 285L1117.6 290M1117.6 290L1121.5 295M1121.5 290L1117.6 295M1117.6 295L1121.5 300M1121.5 295L1117.6 300M1117.6 300L1121.5 305M1121.5 300L1117.6 305M1117.6 305L1121.5 310M1121.5 305L1117.6 310M1117.6 310L1121.5 315M1121.5 310L1117.6 315M1117.6 315L1121.5 320M1121.5 315L1117.6 320M1117.6 320L1121.5 325M1121.5 320L1117.6 325M1117.6 325L1121.5 330M1121.5 325L1117.6 330M1117.6 330L1121.5 335M1121.5 330L1117.6 335M1117.6 335L1121.5 340M1121.5 335L1117.6 340M1117.6 340L1121.5 345M1121.5 340L1117.6 345M1117.6 345L1121.5 350M1121.5 345L1117.6 350M1117.6 350L1121.5 355M1121.5 350L1117.6 355M1117.6 355L1121.5 360M1121.5 355L1117.6 360M1117.6 360L1121.5 365M1121.5 360L1117.6 365M1117.6 365L1121.5 370M1121.5 365L1117.6 370M1117.6 370L1121.5 375M1121.5 370L1117.6 375M1117.6 375L1121.5 380M1121.5 375L1117.6 380" stroke="#a04638" stroke-width=".7" fill="none" opacity=".7"/>
<path d="M1125.6 229 L1125.6 375.4" stroke="#e61414" stroke-width="1.3" stroke-dasharray="5 1.2"/>
<path d="M1137.6 229 L1137.6 375.4" stroke="#00e400" stroke-width="1.2" stroke-dasharray="4.5 1.5"/>
<path d="M1109.6 240 L1109.6 375.4" stroke="#f4f400" stroke-width="1.3" />
<path d="M1117.5 276.5 L1117.5 375.4" stroke="#7c7c7c" stroke-width="1.2" />
<path d="M1121.5 276.5 L1121.5 375.4" stroke="#00e400" stroke-width="1.2" />
<clipPath id="hc1"><rect x="1117.6" y="393" width="19.9" height="164"/></clipPath>
<clipPath id="hx1"><rect x="1117.6" y="393" width="4" height="164"/></clipPath>
<path clip-path="url(#hc1)" d="M1121.6 391.6L1130.2 384L1137.5 390.5M1121.6 396.6L1130.2 389L1137.5 395.5M1121.6 401.6L1130.2 394L1137.5 400.5M1121.6 406.6L1130.2 399L1137.5 405.5M1121.6 411.6L1130.2 404L1137.5 410.5M1121.6 416.6L1130.2 409L1137.5 415.5M1121.6 421.6L1130.2 414L1137.5 420.5M1121.6 426.6L1130.2 419L1137.5 425.5M1121.6 431.6L1130.2 424L1137.5 430.5M1121.6 436.6L1130.2 429L1137.5 435.5M1121.6 441.6L1130.2 434L1137.5 440.5M1121.6 446.6L1130.2 439L1137.5 445.5M1121.6 451.6L1130.2 444L1137.5 450.5M1121.6 456.6L1130.2 449L1137.5 455.5M1121.6 461.6L1130.2 454L1137.5 460.5M1121.6 466.6L1130.2 459L1137.5 465.5M1121.6 471.6L1130.2 464L1137.5 470.5M1121.6 476.6L1130.2 469L1137.5 475.5M1121.6 481.6L1130.2 474L1137.5 480.5M1121.6 486.6L1130.2 479L1137.5 485.5M1121.6 491.6L1130.2 484L1137.5 490.5M1121.6 496.6L1130.2 489L1137.5 495.5M1121.6 501.6L1130.2 494L1137.5 500.5M1121.6 506.6L1130.2 499L1137.5 505.5M1121.6 511.6L1130.2 504L1137.5 510.5M1121.6 516.6L1130.2 509L1137.5 515.5M1121.6 521.6L1130.2 514L1137.5 520.5M1121.6 526.6L1130.2 519L1137.5 525.5M1121.6 531.6L1130.2 524L1137.5 530.5M1121.6 536.6L1130.2 529L1137.5 535.5M1121.6 541.6L1130.2 534L1137.5 540.5M1121.6 546.6L1130.2 539L1137.5 545.5M1121.6 551.6L1130.2 544L1137.5 550.5M1121.6 556.6L1130.2 549L1137.5 555.5M1121.6 561.6L1130.2 554L1137.5 560.5 M1130.2 393 V557" stroke="#a04638" stroke-width="1" fill="none"/>
<path clip-path="url(#hx1)" d="M1117.6 384L1121.5 389M1121.5 384L1117.6 389M1117.6 389L1121.5 394M1121.5 389L1117.6 394M1117.6 394L1121.5 399M1121.5 394L1117.6 399M1117.6 399L1121.5 404M1121.5 399L1117.6 404M1117.6 404L1121.5 409M1121.5 404L1117.6 409M1117.6 409L1121.5 414M1121.5 409L1117.6 414M1117.6 414L1121.5 419M1121.5 414L1117.6 419M1117.6 419L1121.5 424M1121.5 419L1117.6 424M1117.6 424L1121.5 429M1121.5 424L1117.6 429M1117.6 429L1121.5 434M1121.5 429L1117.6 434M1117.6 434L1121.5 439M1121.5 434L1117.6 439M1117.6 439L1121.5 444M1121.5 439L1117.6 444M1117.6 444L1121.5 449M1121.5 444L1117.6 449M1117.6 449L1121.5 454M1121.5 449L1117.6 454M1117.6 454L1121.5 459M1121.5 454L1117.6 459M1117.6 459L1121.5 464M1121.5 459L1117.6 464M1117.6 464L1121.5 469M1121.5 464L1117.6 469M1117.6 469L1121.5 474M1121.5 469L1117.6 474M1117.6 474L1121.5 479M1121.5 474L1117.6 479M1117.6 479L1121.5 484M1121.5 479L1117.6 484M1117.6 484L1121.5 489M1121.5 484L1117.6 489M1117.6 489L1121.5 494M1121.5 489L1117.6 494M1117.6 494L1121.5 499M1121.5 494L1117.6 499M1117.6 499L1121.5 504M1121.5 499L1117.6 504M1117.6 504L1121.5 509M1121.5 504L1117.6 509M1117.6 509L1121.5 514M1121.5 509L1117.6 514M1117.6 514L1121.5 519M1121.5 514L1117.6 519M1117.6 519L1121.5 524M1121.5 519L1117.6 524M1117.6 524L1121.5 529M1121.5 524L1117.6 529M1117.6 529L1121.5 534M1121.5 529L1117.6 534M1117.6 534L1121.5 539M1121.5 534L1117.6 539M1117.6 539L1121.5 544M1121.5 539L1117.6 544M1117.6 544L1121.5 549M1121.5 544L1117.6 549M1117.6 549L1121.5 554M1121.5 549L1117.6 554M1117.6 554L1121.5 559M1121.5 554L1117.6 559" stroke="#a04638" stroke-width=".7" fill="none" opacity=".7"/>
<path d="M1125.6 393 L1125.6 557" stroke="#e61414" stroke-width="1.3" stroke-dasharray="5 1.2"/>
<path d="M1137.6 393 L1137.6 557" stroke="#00e400" stroke-width="1.2" stroke-dasharray="4.5 1.5"/>
<path d="M1109.6 393 L1109.6 557" stroke="#f4f400" stroke-width="1.3" />
<path d="M1117.5 393 L1117.5 557" stroke="#00e400" stroke-width="1.2" />
<path d="M1121.5 393 L1121.5 557" stroke="#00e400" stroke-width="1.2" />
<clipPath id="hc2"><rect x="1117.6" y="569.2" width="19.9" height="127.0"/></clipPath>
<clipPath id="hx2"><rect x="1117.6" y="569.2" width="4" height="81.29999999999995"/></clipPath>
<path clip-path="url(#hc2)" d="M1121.6 567.8L1130.2 560.2L1137.5 566.7M1121.6 572.8L1130.2 565.2L1137.5 571.7M1121.6 577.8L1130.2 570.2L1137.5 576.7M1121.6 582.8L1130.2 575.2L1137.5 581.7M1121.6 587.8L1130.2 580.2L1137.5 586.7M1121.6 592.8L1130.2 585.2L1137.5 591.7M1121.6 597.8L1130.2 590.2L1137.5 596.7M1121.6 602.8L1130.2 595.2L1137.5 601.7M1121.6 607.8L1130.2 600.2L1137.5 606.7M1121.6 612.8L1130.2 605.2L1137.5 611.7M1121.6 617.8L1130.2 610.2L1137.5 616.7M1121.6 622.8L1130.2 615.2L1137.5 621.7M1121.6 627.8L1130.2 620.2L1137.5 626.7M1121.6 632.8L1130.2 625.2L1137.5 631.7M1121.6 637.8L1130.2 630.2L1137.5 636.7M1121.6 642.8L1130.2 635.2L1137.5 641.7M1121.6 647.8L1130.2 640.2L1137.5 646.7M1121.6 652.8L1130.2 645.2L1137.5 651.7M1121.6 657.8L1130.2 650.2L1137.5 656.7M1121.6 662.8L1130.2 655.2L1137.5 661.7M1121.6 667.8L1130.2 660.2L1137.5 666.7M1121.6 672.8L1130.2 665.2L1137.5 671.7M1121.6 677.8L1130.2 670.2L1137.5 676.7M1121.6 682.8L1130.2 675.2L1137.5 681.7M1121.6 687.8L1130.2 680.2L1137.5 686.7M1121.6 692.8L1130.2 685.2L1137.5 691.7M1121.6 697.8L1130.2 690.2L1137.5 696.7M1121.6 702.8L1130.2 695.2L1137.5 701.7 M1130.2 569.2 V696.2" stroke="#a04638" stroke-width="1" fill="none"/>
<path clip-path="url(#hx2)" d="M1117.6 560.2L1121.5 565.2M1121.5 560.2L1117.6 565.2M1117.6 565.2L1121.5 570.2M1121.5 565.2L1117.6 570.2M1117.6 570.2L1121.5 575.2M1121.5 570.2L1117.6 575.2M1117.6 575.2L1121.5 580.2M1121.5 575.2L1117.6 580.2M1117.6 580.2L1121.5 585.2M1121.5 580.2L1117.6 585.2M1117.6 585.2L1121.5 590.2M1121.5 585.2L1117.6 590.2M1117.6 590.2L1121.5 595.2M1121.5 590.2L1117.6 595.2M1117.6 595.2L1121.5 600.2M1121.5 595.2L1117.6 600.2M1117.6 600.2L1121.5 605.2M1121.5 600.2L1117.6 605.2M1117.6 605.2L1121.5 610.2M1121.5 605.2L1117.6 610.2M1117.6 610.2L1121.5 615.2M1121.5 610.2L1117.6 615.2M1117.6 615.2L1121.5 620.2M1121.5 615.2L1117.6 620.2M1117.6 620.2L1121.5 625.2M1121.5 620.2L1117.6 625.2M1117.6 625.2L1121.5 630.2M1121.5 625.2L1117.6 630.2M1117.6 630.2L1121.5 635.2M1121.5 630.2L1117.6 635.2M1117.6 635.2L1121.5 640.2M1121.5 635.2L1117.6 640.2M1117.6 640.2L1121.5 645.2M1121.5 640.2L1117.6 645.2M1117.6 645.2L1121.5 650.2M1121.5 645.2L1117.6 650.2M1117.6 650.2L1121.5 655.2M1121.5 650.2L1117.6 655.2M1117.6 655.2L1121.5 660.2M1121.5 655.2L1117.6 660.2M1117.6 660.2L1121.5 665.2M1121.5 660.2L1117.6 665.2M1117.6 665.2L1121.5 670.2M1121.5 665.2L1117.6 670.2M1117.6 670.2L1121.5 675.2M1121.5 670.2L1117.6 675.2M1117.6 675.2L1121.5 680.2M1121.5 675.2L1117.6 680.2M1117.6 680.2L1121.5 685.2M1121.5 680.2L1117.6 685.2M1117.6 685.2L1121.5 690.2M1121.5 685.2L1117.6 690.2M1117.6 690.2L1121.5 695.2M1121.5 690.2L1117.6 695.2M1117.6 695.2L1121.5 700.2M1121.5 695.2L1117.6 700.2" stroke="#a04638" stroke-width=".7" fill="none" opacity=".7"/>
<path d="M1125.6 569.2 L1125.6 696.2" stroke="#e61414" stroke-width="1.3" stroke-dasharray="5 1.2"/>
<path d="M1137.6 569.2 L1137.6 696.2" stroke="#00e400" stroke-width="1.2" stroke-dasharray="4.5 1.5"/>
<path d="M1109.6 569.2 L1109.6 685" stroke="#f4f400" stroke-width="1.3" />
<path d="M1117.5 569.2 L1117.5 650.5" stroke="#00e400" stroke-width="1.2" />
<path d="M1121.5 569.2 L1121.5 650.5" stroke="#00e400" stroke-width="1.2" />
<path d="M1137.6 178.7 L1137.6 229" stroke="#00e400" stroke-width="1.4" />
<path d="M1049 195.8 L1112.3 195.8" stroke="#8ab0e0" stroke-width="1.1" />
<rect x="1112.3" y="195.8" width="25.3" height="24.7" fill="none" stroke="#a6a6a6" stroke-width="1.2"/>
<path d="M1112.3 220.5 V195.8 H1137.6" stroke="#8ab0e0" stroke-width="1.2" fill="none"/>
<path d="M1112.3 195.8 L1137.6 220.5 M1137.6 195.8 L1112.3 220.5" stroke="#a0a0a0" stroke-width="1"/>
<path d="M1048 220.5 L1112.3 220.5" stroke="#e61414" stroke-width="1.4" />
<path d="M1048 226.5 L1137.6 226.5" stroke="#e61414" stroke-width="1.5" />
<path d="M1126.5 229.5 L1137.5 229.5" stroke="#e61414" stroke-width="1.3" />
<path d="M1109.4 226.5 L1109.4 240 L1117.3 276.5 L1125.6 276.5 L1125.6 226.5 Z" stroke="#e61414" stroke-width="1.4" fill="url(#rh)" />
<path d="M1116.8 650.5 L1109.5 685 L1109.5 700.3 L1125.4 700.3 L1125.4 650.5 Z" stroke="#d02020" stroke-width="1.2" fill="url(#rh)" />
<path d="M1138 696.2 V793 H1125 V743.5 L1127.6 743 L1130.2 712 L1127.5 711.6 Q1122.6 706 1127.5 700.8 L1125.5 700.3 V696.2 Z" fill="url(#fh)" stroke="#e61414" stroke-width="1.3"/>
<path d="M1125.5 700.3 L1138 700.3" stroke="#e61414" stroke-width="1.1" />
<rect x="1049.5" y="793" width="136.5" height="12.5" fill="url(#fh)"/>
<path d="M1049 793 L1186.5 793" stroke="#0000ee" stroke-width="1.2" stroke-dasharray="2.2 2"/>
<path d="M1049 805.6 L1186.5 805.6" stroke="#0000ee" stroke-width="1.2" stroke-dasharray="2.2 2"/>
<path d="M972 207.4 L1049 207.4" stroke="#b0b0b0" stroke-width="1" stroke-dasharray="14.5 6.5"/>
<path d="M989.5 199.4 H1008.5" stroke="#e61414" stroke-width="2"/><path d="M990 199.9 L999 207.4 L1008 199.9" stroke="#e61414" stroke-width="1.2" fill="none"/><text x="983" y="196.9" font-size="12.57" fill="#00ff00" text-anchor="start" textLength="31" lengthAdjust="spacingAndGlyphs" font-family="Liberation Sans">+3.300</text>
<path d="M972 792.9 L1049 792.9" stroke="#b0b0b0" stroke-width="1" stroke-dasharray="14.5 6.5"/>
<path d="M989.5 784.9 H1008.5" stroke="#e61414" stroke-width="2"/><path d="M990 785.4 L999 792.9 L1008 785.4" stroke="#e61414" stroke-width="1.2" fill="none"/><text x="983" y="782.4" font-size="12.57" fill="#00ff00" text-anchor="start" textLength="31" lengthAdjust="spacingAndGlyphs" font-family="Liberation Sans">&#177;0.000</text>
<g>
<clipPath id="pc"><path d="M377.5 847 H722.3 V863.5 H434.5 V930 H394.2 V863.5 H377.5 Z M727.8 847 H767 V930 H727.8 Z"/></clipPath>
<path clip-path="url(#pc)" d="M377 928.56L379.44 931M377 924.41L383.59 931M377 916.29L391.71 931M377 912.14L395.86 931M377 904.02L403.98 931M377 899.87L408.13 931M377 891.75L416.25 931M377 887.6L420.4 931M377 879.48L428.52 931M377 875.33L432.67 931M377 867.21L440.79 931M377 863.06L444.94 931M377 854.94L453.06 931M377 850.79L457.21 931M380.33 846L465.33 931M384.48 846L469.48 931M392.6 846L477.6 931M396.75 846L481.75 931M404.87 846L489.87 931M409.02 846L494.02 931M417.14 846L502.14 931M421.29 846L506.29 931M429.41 846L514.41 931M433.56 846L518.56 931M441.68 846L526.68 931M445.83 846L530.83 931M453.95 846L538.95 931M458.1 846L543.1 931M466.22 846L551.22 931M470.37 846L555.37 931M478.49 846L563.49 931M482.64 846L567.64 931M490.76 846L575.76 931M494.91 846L579.91 931M503.03 846L588.03 931M507.18 846L592.18 931M515.3 846L600.3 931M519.45 846L604.45 931M527.57 846L612.57 931M531.72 846L616.72 931M539.84 846L624.84 931M543.99 846L628.99 931M552.11 846L637.11 931M556.26 846L641.26 931M564.38 846L649.38 931M568.53 846L653.53 931M576.65 846L661.65 931M580.8 846L665.8 931M588.92 846L673.92 931M593.07 846L678.07 931M601.19 846L686.19 931M605.34 846L690.34 931M613.46 846L698.46 931M617.61 846L702.61 931M625.73 846L710.73 931M629.88 846L714.88 931M638 846L723 931M642.15 846L727.15 931M650.27 846L735.27 931M654.42 846L739.42 931M662.54 846L747.54 931M666.69 846L751.69 931M674.81 846L759.81 931M678.96 846L763.96 931M687.08 846L768 926.92M691.23 846L768 922.77M699.35 846L768 914.65M703.5 846L768 910.5M711.62 846L768 902.38M715.77 846L768 898.23M723.89 846L768 890.11M728.04 846L768 885.96M736.16 846L768 877.84M740.31 846L768 873.69M748.43 846L768 865.57M752.58 846L768 861.42M760.7 846L768 853.3M764.85 846L768 849.15" stroke="#8e8e8e" stroke-width="1" fill="none"/>
<rect x="748" y="867" width="20" height="22.3" fill="#212830"/><rect x="745" y="910" width="23" height="20.5" fill="#212830"/>
<path d="M377.5 842.9 L767 842.9" stroke="#c01a1a" stroke-width="1.8" />
<path d="M377 846.4 L767.3 846.4" stroke="#00e400" stroke-width="1.7" />
<path d="M377 863.6 L393.9 863.6 L393.9 930" stroke="#00e400" stroke-width="1.5" fill="none" />
<path d="M434.8 930 L434.8 863.6 L727.3 863.6" stroke="#00e400" stroke-width="1.5" fill="none" />
<path d="M727.3 846 L727.3 930" stroke="#00e400" stroke-width="1.6" />
<path d="M767 866.8 L747.6 866.8 L747.6 889.4 L767 889.4" stroke="#00e400" stroke-width="1.5" fill="none" />
<path d="M767 909.6 L744.5 909.6 L744.5 930" stroke="#00e400" stroke-width="1.5" fill="none" />
<path d="M767 912.6 L747.6 912.6 L747.6 930" stroke="#e61414" stroke-width="1.5" fill="none" />
<path d="M377.5 866.6 L391 866.6" stroke="#e61414" stroke-width="1.5" />
<path d="M438 866.6 L724.4 866.6 L724.4 930" stroke="#e61414" stroke-width="1.5" fill="none" />
<path d="M390.6 866 L390.6 930" stroke="#f0e8e8" stroke-width="1.4" />
<path d="M392.2 867 L392.2 930" stroke="#b04040" stroke-width="0.8" />
<path d="M437.6 866 L437.6 930" stroke="#f0f0f0" stroke-width="1.4" />
<rect x="437.5" y="868.7" width="286.5" height="2.9" fill="#00e400"/>
<path d="M438 873 L723 873" stroke="#f4f400" stroke-width="1.3" />
<path d="M452.5 930 V881.6 H709 V930" stroke="#8a3c38" stroke-width="1.3" fill="none"/>
<path d="M435 892.2 L727 892.2" stroke="#8c8c8c" stroke-width="1.2" />
<path d="M445 873.5 L445 894" stroke="#8c8c8c" stroke-width="1" />
<path d="M716.5 873.5 L716.5 894" stroke="#8c8c8c" stroke-width="1" />
<path d="M724.4 873.5 L724.4 894" stroke="#8c8c8c" stroke-width="1" />
<path d="M435.6 894.2 L439.6 890.2" stroke="#8c8c8c" stroke-width="1.2" />
<path d="M443 894.2 L447 890.2" stroke="#8c8c8c" stroke-width="1.2" />
<path d="M714.5 894.2 L718.5 890.2" stroke="#8c8c8c" stroke-width="1.2" />
<path d="M722.4 894.2 L726.4 890.2" stroke="#8c8c8c" stroke-width="1.2" />
<text x="436" y="891.5" font-size="11.17" fill="#00ff00" text-anchor="start" textLength="10" lengthAdjust="spacingAndGlyphs" font-family="Liberation Sans">50</text>
<text x="715.6" y="891.5" font-size="11.17" fill="#00ff00" text-anchor="start" textLength="10" lengthAdjust="spacingAndGlyphs" font-family="Liberation Sans">50</text>
<text x="570.5" y="891.5" font-size="11.17" fill="#00ff00" text-anchor="start" textLength="20.5" lengthAdjust="spacingAndGlyphs" font-family="Liberation Sans">1750</text>
<rect x="536.96" y="888.83" width="1" height="1" fill="#c8c8c8"/><rect x="618.73" y="886.32" width="1" height="1" fill="#c8c8c8"/><rect x="589.97" y="895.7" width="1" height="1" fill="#c8c8c8"/><rect x="470.5" y="900.24" width="1" height="1" fill="#c8c8c8"/><rect x="465.37" y="897.88" width="1" height="1" fill="#c8c8c8"/><rect x="473.46" y="886.9" width="1" height="1" fill="#c8c8c8"/><rect x="562.13" y="910.46" width="1" height="1" fill="#c8c8c8"/><rect x="486.95" y="891.14" width="1" height="1" fill="#c8c8c8"/><rect x="612.86" y="914.33" width="1" height="1" fill="#c8c8c8"/><rect x="600.28" y="896.69" width="1" height="1" fill="#c8c8c8"/><rect x="700.06" y="885.49" width="1" height="1" fill="#c8c8c8"/><rect x="670.62" y="893.27" width="1" height="1" fill="#c8c8c8"/><rect x="492.06" y="887.77" width="1" height="1" fill="#c8c8c8"/><rect x="533.12" y="910.12" width="1" height="1" fill="#c8c8c8"/><rect x="501.18" y="902.61" width="1" height="1" fill="#c8c8c8"/><rect x="615.73" y="895.92" width="1" height="1" fill="#c8c8c8"/><rect x="592.94" y="886.01" width="1" height="1" fill="#c8c8c8"/><rect x="470.9" y="890.59" width="1" height="1" fill="#c8c8c8"/><rect x="626.1" y="897.68" width="1" height="1" fill="#c8c8c8"/><rect x="534.54" y="902.74" width="1" height="1" fill="#c8c8c8"/><rect x="569.3" y="893.59" width="1" height="1" fill="#c8c8c8"/><rect x="654.59" y="906.37" width="1" height="1" fill="#c8c8c8"/><rect x="517.02" y="902.38" width="1" height="1" fill="#c8c8c8"/><rect x="587.3" y="912" width="1" height="1" fill="#c8c8c8"/><rect x="638.36" y="893.21" width="1" height="1" fill="#c8c8c8"/><rect x="701.04" y="887.78" width="1" height="1" fill="#c8c8c8"/><rect x="560.53" y="908.23" width="1" height="1" fill="#c8c8c8"/><rect x="494" y="899.65" width="1" height="1" fill="#c8c8c8"/><rect x="465.8" y="905.38" width="1" height="1" fill="#c8c8c8"/><rect x="647.14" y="902.34" width="1" height="1" fill="#c8c8c8"/><rect x="674.87" y="894.04" width="1" height="1" fill="#c8c8c8"/><rect x="629.82" y="903.02" width="1" height="1" fill="#c8c8c8"/><rect x="600.97" y="898.6" width="1" height="1" fill="#c8c8c8"/><rect x="665.99" y="914.23" width="1" height="1" fill="#c8c8c8"/><rect x="574.52" y="905.25" width="1" height="1" fill="#c8c8c8"/><rect x="471.17" y="906.45" width="1" height="1" fill="#c8c8c8"/><rect x="617.78" y="915.78" width="1" height="1" fill="#c8c8c8"/><rect x="661.48" y="893.11" width="1" height="1" fill="#c8c8c8"/><rect x="552.45" y="905.4" width="1" height="1" fill="#c8c8c8"/><rect x="461.64" y="898.77" width="1" height="1" fill="#c8c8c8"/><rect x="498.01" y="887.75" width="1" height="1" fill="#c8c8c8"/><rect x="470.74" y="908.58" width="1" height="1" fill="#c8c8c8"/><rect x="488.34" y="891.92" width="1" height="1" fill="#c8c8c8"/><rect x="553.74" y="911.89" width="1" height="1" fill="#c8c8c8"/><rect x="476.15" y="898.37" width="1" height="1" fill="#c8c8c8"/><rect x="593.36" y="912.27" width="1" height="1" fill="#c8c8c8"/>
<path d="M376.3 839.2 L403 839.2" stroke="#0000ee" stroke-width="1.6" /><rect x="416.1" y="838.3000000000001" width="1.8" height="1.8" fill="#0000ee"/><path d="M430.7 839.2 L457.4 839.2" stroke="#0000ee" stroke-width="1.6" /><rect x="470.5" y="838.3000000000001" width="1.8" height="1.8" fill="#0000ee"/><path d="M485.1 839.2 L511.8 839.2" stroke="#0000ee" stroke-width="1.6" /><rect x="524.9" y="838.3000000000001" width="1.8" height="1.8" fill="#0000ee"/><path d="M539.5 839.2 L566.2 839.2" stroke="#0000ee" stroke-width="1.6" /><rect x="579.3" y="838.3000000000001" width="1.8" height="1.8" fill="#0000ee"/><path d="M593.9 839.2 L620.6 839.2" stroke="#0000ee" stroke-width="1.6" /><rect x="633.7" y="838.3000000000001" width="1.8" height="1.8" fill="#0000ee"/><path d="M648.3 839.2 L675 839.2" stroke="#0000ee" stroke-width="1.6" /><rect x="688.1" y="838.3000000000001" width="1.8" height="1.8" fill="#0000ee"/><path d="M702.7 839.2 L729.4 839.2" stroke="#0000ee" stroke-width="1.6" /><rect x="742.5" y="838.3000000000001" width="1.8" height="1.8" fill="#0000ee"/><path d="M757.1 839.2 L767.3 839.2" stroke="#0000ee" stroke-width="1.6" />
<path d="M376.3 929.8 L403 929.8" stroke="#0000ee" stroke-width="1.6" /><rect x="416.1" y="928.9" width="1.8" height="1.8" fill="#0000ee"/><path d="M430.7 929.8 L457.4 929.8" stroke="#0000ee" stroke-width="1.6" /><rect x="470.5" y="928.9" width="1.8" height="1.8" fill="#0000ee"/><path d="M485.1 929.8 L511.8 929.8" stroke="#0000ee" stroke-width="1.6" /><rect x="524.9" y="928.9" width="1.8" height="1.8" fill="#0000ee"/><path d="M539.5 929.8 L566.2 929.8" stroke="#0000ee" stroke-width="1.6" /><rect x="579.3" y="928.9" width="1.8" height="1.8" fill="#0000ee"/><path d="M593.9 929.8 L620.6 929.8" stroke="#0000ee" stroke-width="1.6" /><rect x="633.7" y="928.9" width="1.8" height="1.8" fill="#0000ee"/><path d="M648.3 929.8 L675 929.8" stroke="#0000ee" stroke-width="1.6" /><rect x="688.1" y="928.9" width="1.8" height="1.8" fill="#0000ee"/><path d="M702.7 929.8 L729.4 929.8" stroke="#0000ee" stroke-width="1.6" /><rect x="742.5" y="928.9" width="1.8" height="1.8" fill="#0000ee"/><path d="M757.1 929.8 L767.3 929.8" stroke="#0000ee" stroke-width="1.6" />
<path d="M376.3 839 L376.3 870.6" stroke="#0000ee" stroke-width="1.6" />
<rect x="375.40000000000003" y="884.3" width="1.8" height="1.8" fill="#0000ee"/>
<path d="M376.3 899 L376.3 930" stroke="#0000ee" stroke-width="1.6" />
<path d="M767.3 839 L767.3 870.6" stroke="#0000ee" stroke-width="1.6" />
<rect x="766.4" y="884.3" width="1.8" height="1.8" fill="#0000ee"/>
<path d="M767.3 899 L767.3 930" stroke="#0000ee" stroke-width="1.6" />
</g>
<path d="M384.4 998.8 V964.2 L394.05 998.8 L403.7 964.2 V998.8 M411.5 964.2 V998.8 M420.9 998.8 V964.2 H430.4 Q437.5 964.2 437.5 972.6 Q437.5 981.0 430.4 981.0 H420.9 M429.9 981.0 L437.7 998.8 M445.9 998.8 V964.2 H455.4 Q462.5 964.2 462.5 972.6 Q462.5 981.0 455.4 981.0 H445.9 M454.9 981.0 L462.7 998.8 M493.3 998.8 V964.2 H502.8 Q509.90000000000003 964.2 509.90000000000003 972.6 Q509.90000000000003 981.0 502.8 981.0 H493.3 M502.3 981.0 L510.1 998.8 M541.8 998.8 V964.2 H551.3 Q558.4 964.2 558.4 972.6 Q558.4 981.0 551.3 981.0 H541.8 M562.2 998.8 L571.85 964.2 L581.5 998.8 M565.6 987 H578.1 M585.7 998.8 V964.2 L602.3 998.8 V964.2 M627.3 964.2 H611.7 V998.8 H627.3 M611.7 980.5 H623.2 M633.1 964.2 V998.8 H646.6" stroke="#e208e2" stroke-width="1" fill="none" stroke-linejoin="bevel"/>
<ellipse cx="478.2" cy="981.5" rx="9.4" ry="17.3" stroke="#e208e2" stroke-width="1" fill="none"/></svg>
<div style="left:0px;top:0px;width:1919px;height:24px;background:#632317;"></div>
<div style="left:0px;top:24px;width:1919px;height:21px;background:#575757;"></div>
<div style="left:0px;top:24px;width:1919px;height:1px;background:#3e3e3e;"></div>
<div style="left:41px;top:0px;width:262px;height:24px;background:linear-gradient(#b0b0b0,#a6a6a6);"></div>
<div style="left:1px;top:0px;width:40px;height:41px;background:linear-gradient(#bdbdbd 0%,#a9a9a9 45%,#7c7c7c 55%,#6c6c6c 100%);border:1px solid #1c1c1c;border-top:none;"></div>
<svg style="left:0px;top:0px;" width="41" height="41" viewBox="0 0 41 41">
      <path d="M5 32.5 L13.2 3 H20.2 L28.6 32.5 H21.8 L20 25.8 Q15.5 23.2 11.8 27.2 L10.6 32.5 Z M13.6 20.6 Q16.3 18.6 18.9 20.2 L16.5 10 Z" fill="#c4151b" fill-rule="evenodd"/>
      <path d="M5 32.5 L10.6 32.5 L11.8 27.2 Q9 29 7 26 Z" fill="#8c0f14"/>
      <path d="M21.8 32.5 H28.6 L26.8 26 Q25 29 20.6 28 Z" fill="#e2574a"/>
      <path d="M13.2 3 H20.2 L21.5 7.5 Q17 4.5 12.2 6.5 Z" fill="#e03a3a"/>
    </svg>
<svg style="left:30px;top:17px;" width="8" height="5" viewBox="0 0 8 5"><path d="M0 0 L8 0 L4 4.5 Z" fill="#222"/></svg>
<svg style="left:0px;top:0px;" width="310" height="24" viewBox="0 0 310 24"><path d="M50 6 H61 L66 11 V18 H50 Z" fill="#fff"/><path d="M61 6 V11 H66 Z" fill="#d0d0d0"/><path d="M74 7 H80 L81.5 9 H87 V11 H77 L74 18 Z" fill="#fff"/><path d="M77.5 11.5 H90.5 L87 18.5 H74.5 Z" fill="#f4f6fa" stroke="#c9d3e6" stroke-width=".6"/><rect x="98" y="5" width="16" height="14" rx="1" fill="#c3c3c3"/><rect x="101" y="5" width="10" height="6" fill="#fff"/><rect x="101" y="14" width="10" height="5" fill="#f0f0f0"/><rect x="103" y="15.5" width="3" height="3" fill="#9a9a9a"/><rect x="122" y="5" width="16" height="14" rx="1" fill="#c3c3c3"/><rect x="125" y="5" width="10" height="6" fill="#fff"/><rect x="125" y="14" width="8" height="5" fill="#f0f0f0"/><path d="M130 18.5 L131 15 L136 10 L138.5 12.5 L133.5 17.5 Z" fill="#f0c878"/><path d="M135 11 L136.5 9.5 L139 12 L137.5 13.5 Z" fill="#b5623c"/><rect x="147" y="4.5" width="10" height="15" rx="1.3" fill="#7b7b7b" stroke="#d8d8d8" stroke-width="1"/><rect x="150.5" y="17.6" width="3" height="1" fill="#eee"/><path d="M154 14 H158 L159 15 H162.5 V19.5 H154 Z" fill="#f1c66c"/><rect x="174" y="4.5" width="10" height="15" rx="1.3" fill="#8a8a8a" stroke="#c8c8c8" stroke-width="1"/><rect x="177.5" y="17.6" width="3" height="1" fill="#333"/><path d="M171.5 9 H177 V6.5 L181.5 10.5 L177 14.5 V12 H171.5 Z" fill="#48a4e8"/><rect x="196.5" y="4.5" width="11" height="5" fill="#fff"/><rect x="193.5" y="9" width="17" height="7" rx="1" fill="#f2f2f2"/><rect x="196.5" y="13.5" width="11" height="6" fill="#66b5f0"/><rect x="196.5" y="13.5" width="11" height="1.2" fill="#fff"/><rect x="194.8" y="10.3" width="2" height="1.2" fill="#7ec78a"/><path d="M218 11.5 L224.5 6.5 V9.5 Q232 9.5 233.5 16 Q230 12.8 224.5 13.3 V16.5 Z" fill="#c4c4c4"/><path d="M241 9.5 H246 L243.5 12.5 Z" fill="#c4c4c4"/><path d="M269.5 11.5 L263 6.5 V9.5 Q255.5 9.5 254 16 Q257.5 12.8 263 13.3 V16.5 Z" fill="#c4c4c4"/><path d="M277 9.5 H282 L279.5 12.5 Z" fill="#c4c4c4"/><rect x="290" y="7.5" width="8" height="1.6" fill="#fff"/><path d="M290 11 H298 L294 15.5 Z" fill="#fff"/></svg>
<div class="t" style="left:690.5px;top:5px;font-size:12px;color:#161616;letter-spacing:-0.396px;">Autodesk AutoCAD 2019</div>
<div class="t" style="left:832px;top:5px;font-size:12px;color:#161616;letter-spacing:0.075px;">mirror panel.dwg</div>
<div style="left:1310px;top:0px;width:447px;height:24px;background:linear-gradient(#b1b1b1,#a7a7a7);"></div>
<svg style="left:1314px;top:7px;" width="6" height="10" viewBox="0 0 6 10"><path d="M0.5 0.5 L5 4.5 L0.5 9 Z" fill="#fff" stroke="#666" stroke-width=".5"/></svg>
<div style="left:1325px;top:1px;width:178px;height:22px;background:#808080;border:1px solid #666;"></div>
<div class="t" style="left:1327.5px;top:5.5px;font-size:11.5px;color:#d4d4d4;letter-spacing:-0.520px;font-style:italic;">Type a keyword or phrase</div>
<svg style="left:1507px;top:4px;" width="18" height="16" viewBox="0 0 18 16"><path d="M3 2 H7 V5 H10 V2 H14 V5 L16 8 V14 H10.5 V9 H6.5 V14 H1 V8 L3 5 Z" fill="#1f1f1f"/><rect x="2.4" y="9" width="2.7" height="3.8" fill="#ddd"/><rect x="11.9" y="9" width="2.7" height="3.8" fill="#ddd"/></svg>
<svg style="left:1531px;top:3px;" width="18" height="18" viewBox="0 0 18 18"><circle cx="9" cy="5.5" r="4" fill="#f4f4f4" stroke="#333" stroke-width="1"/><path d="M1 16.5 Q1.5 10.5 6.5 10 L9 12 L11.5 10 Q16.5 10.5 17 16.5 Z" fill="#f4f4f4" stroke="#333" stroke-width="1"/></svg>
<div class="t" style="left:1553px;top:5px;font-size:12.5px;color:#fbfbfb;letter-spacing:-0.569px;">Sign In</div>
<svg style="left:1636px;top:10px;" width="7" height="5" viewBox="0 0 7 5"><path d="M0 0 H6 L3 3.5 Z" fill="#fff"/></svg>
<svg style="left:1653px;top:4px;" width="18" height="16" viewBox="0 0 18 16"><path d="M0.5 1.5 H3.5 L5.5 9.5 H14 L15.8 3.5 H4.5" fill="none" stroke="#1f1f1f" stroke-width="1.6"/><path d="M5 4 H15 L13.6 9 H6 Z" fill="#e8e8e8"/><circle cx="6.8" cy="12.8" r="1.6" fill="#1f1f1f"/><circle cx="12.8" cy="12.8" r="1.6" fill="#1f1f1f"/></svg>
<svg style="left:1678px;top:4px;" width="16" height="15" viewBox="0 0 16 15"><path d="M8 1.5 L1.5 12 Q8 15 14.5 12 Z" fill="none" stroke="#2a3b6a" stroke-width="1.7"/><circle cx="8" cy="2.8" r="2" fill="#eef" stroke="#2a3b6a" stroke-width="1"/><circle cx="2.5" cy="11.8" r="1.8" fill="#eef" stroke="#2a3b6a" stroke-width="1"/><circle cx="13.5" cy="11.8" r="1.8" fill="#eef" stroke="#2a3b6a" stroke-width="1"/></svg>
<svg style="left:1698px;top:10px;" width="7" height="5" viewBox="0 0 7 5"><path d="M0 0 H6 L3 3.5 Z" fill="#fff"/></svg>
<div style="left:1714px;top:3px;width:1px;height:18px;background:#9a9a9a;"></div>
<svg style="left:1723px;top:3px;" width="18" height="18" viewBox="0 0 18 18"><circle cx="9" cy="9" r="7.3" fill="#f6f6f6" stroke="#1c2440" stroke-width="1.5"/><text x="9" y="13.3" font-size="12" font-weight="bold" text-anchor="middle" fill="#1c2440" font-family="Liberation Sans">?</text></svg>
<svg style="left:1746px;top:10px;" width="7" height="5" viewBox="0 0 7 5"><path d="M0 0 H6 L3 3.5 Z" fill="#fff"/></svg>
<svg style="left:1795px;top:0px;" width="124" height="24" viewBox="0 0 124 24"><path d="M4 11.5 H14" stroke="#fff" stroke-width="1"/><rect x="49.5" y="8.5" width="8" height="8" fill="none" stroke="#fff"/><path d="M51.5 8.5 V6.5 H59.5 V14.5 H57.5" fill="none" stroke="#fff"/><path d="M95 6 L105 16 M105 6 L95 16" stroke="#fff" stroke-width="1.1"/></svg>
<div style="left:47px;top:27px;width:50px;height:19px;background:linear-gradient(#6a6a6a,#5d5d5d);border:1px solid #3a3a3a;border-bottom:none;border-radius:2px 2px 0 0;"></div>
<div class="t" style="left:55px;top:28px;font-size:12px;color:#f4f4f4;letter-spacing:0.330px;">Home</div>
<div class="t" style="left:108px;top:28px;font-size:12px;color:#f4f4f4;letter-spacing:-0.202px;">Insert</div>
<div class="t" style="left:157px;top:28px;font-size:12px;color:#f4f4f4;letter-spacing:0.137px;">Annotate</div>
<div class="t" style="left:226px;top:28px;font-size:12px;color:#f4f4f4;letter-spacing:-0.113px;">Parametric</div>
<div class="t" style="left:303px;top:28px;font-size:12px;color:#f4f4f4;letter-spacing:-0.337px;">View</div>
<div class="t" style="left:348px;top:28px;font-size:12px;color:#f4f4f4;letter-spacing:-0.073px;">Manage</div>
<div class="t" style="left:411px;top:28px;font-size:12px;color:#f4f4f4;letter-spacing:0.395px;">Output</div>
<div class="t" style="left:469px;top:28px;font-size:12px;color:#f4f4f4;letter-spacing:0.219px;">Add-ins</div>
<div class="t" style="left:531px;top:28px;font-size:12px;color:#f4f4f4;letter-spacing:-0.037px;">Collaborate</div>
<div class="t" style="left:612px;top:28px;font-size:12px;color:#f4f4f4;letter-spacing:-0.585px;">Express Tools</div>
<div class="t" style="left:701px;top:28px;font-size:12px;color:#f4f4f4;letter-spacing:-0.226px;">Featured Apps</div>
<svg style="left:808px;top:30px;" width="16" height="10" viewBox="0 0 16 10"><rect x="0.5" y="1" width="13" height="7.5" rx="2" fill="#f4f4f4" stroke="#3a3a3a" stroke-width=".8"/><path d="M4 6.5 H10 L7 3 Z" fill="#333"/></svg>
<svg style="left:826px;top:33px;" width="7" height="5" viewBox="0 0 7 5"><path d="M0 0 H6 L3 3.5 Z" fill="#fff"/></svg>
<div style="left:0px;top:44px;width:1919px;height:100px;background:#5d5d5d;"></div>
<div style="left:0px;top:44px;width:1919px;height:1px;background:#2f2f2f;"></div>
<div style="left:1672px;top:45px;width:247px;height:97px;background:linear-gradient(#4e4e4e,#444444);"></div>
<div style="left:0px;top:141px;width:1919px;height:2px;background:#2e2e2e;"></div>
<div style="left:0px;top:143px;width:1919px;height:1px;background:#707070;"></div>
<div style="left:0px;top:45px;width:2px;height:97px;background:#3a3a3a;"></div>
<div style="left:2px;top:45px;width:1px;height:97px;background:#6a6a6a;"></div>
<div style="left:3px;top:124px;width:221px;height:17px;background:linear-gradient(#4b4b4b,#585858);"></div>
<div style="left:224px;top:46px;width:1px;height:95px;background:#6c6c6c;"></div>
<div style="left:225px;top:46px;width:1px;height:95px;background:#3c3c3c;"></div>
<div style="left:226px;top:46px;width:1px;height:95px;background:#6c6c6c;"></div>
<div class="t" style="left:7px;width:200px;text-align:center;top:125.5px;font-size:12px;color:#f4f4f4;">Draw</div>
<div style="left:227px;top:124px;width:247px;height:17px;background:linear-gradient(#4b4b4b,#585858);"></div>
<div style="left:474px;top:46px;width:1px;height:95px;background:#6c6c6c;"></div>
<div style="left:475px;top:46px;width:1px;height:95px;background:#3c3c3c;"></div>
<div style="left:476px;top:46px;width:1px;height:95px;background:#6c6c6c;"></div>
<div class="t" style="left:245px;width:200px;text-align:center;top:125.5px;font-size:12px;color:#f4f4f4;">Modify</div>
<div style="left:478px;top:124px;width:185px;height:17px;background:linear-gradient(#4b4b4b,#585858);"></div>
<div style="left:663px;top:46px;width:1px;height:95px;background:#6c6c6c;"></div>
<div style="left:664px;top:46px;width:1px;height:95px;background:#3c3c3c;"></div>
<div style="left:665px;top:46px;width:1px;height:95px;background:#6c6c6c;"></div>
<div class="t" style="left:463px;width:200px;text-align:center;top:125.5px;font-size:12px;color:#f4f4f4;">Annotation</div>
<div style="left:667px;top:124px;width:269px;height:17px;background:linear-gradient(#4b4b4b,#585858);"></div>
<div style="left:936px;top:46px;width:1px;height:95px;background:#6c6c6c;"></div>
<div style="left:937px;top:46px;width:1px;height:95px;background:#3c3c3c;"></div>
<div style="left:938px;top:46px;width:1px;height:95px;background:#6c6c6c;"></div>
<div class="t" style="left:695px;width:200px;text-align:center;top:125.5px;font-size:12px;color:#f4f4f4;">Layers</div>
<div style="left:940px;top:124px;width:157px;height:17px;background:linear-gradient(#4b4b4b,#585858);"></div>
<div style="left:1097px;top:46px;width:1px;height:95px;background:#6c6c6c;"></div>
<div style="left:1098px;top:46px;width:1px;height:95px;background:#3c3c3c;"></div>
<div style="left:1099px;top:46px;width:1px;height:95px;background:#6c6c6c;"></div>
<div class="t" style="left:911px;width:200px;text-align:center;top:125.5px;font-size:12px;color:#f4f4f4;">Block</div>
<div style="left:1101px;top:124px;width:261px;height:17px;background:linear-gradient(#4b4b4b,#585858);"></div>
<div style="left:1362px;top:46px;width:1px;height:95px;background:#6c6c6c;"></div>
<div style="left:1363px;top:46px;width:1px;height:95px;background:#3c3c3c;"></div>
<div style="left:1364px;top:46px;width:1px;height:95px;background:#6c6c6c;"></div>
<div class="t" style="left:1118px;width:200px;text-align:center;top:125.5px;font-size:12px;color:#f4f4f4;">Properties</div>
<div style="left:1366px;top:124px;width:65px;height:17px;background:linear-gradient(#4b4b4b,#585858);"></div>
<div style="left:1431px;top:46px;width:1px;height:95px;background:#6c6c6c;"></div>
<div style="left:1432px;top:46px;width:1px;height:95px;background:#3c3c3c;"></div>
<div style="left:1433px;top:46px;width:1px;height:95px;background:#6c6c6c;"></div>
<div class="t" style="left:1291px;width:200px;text-align:center;top:125.5px;font-size:12px;color:#f4f4f4;">Groups</div>
<div style="left:1435px;top:124px;width:93px;height:17px;background:linear-gradient(#4b4b4b,#585858);"></div>
<div style="left:1528px;top:46px;width:1px;height:95px;background:#6c6c6c;"></div>
<div style="left:1529px;top:46px;width:1px;height:95px;background:#3c3c3c;"></div>
<div style="left:1530px;top:46px;width:1px;height:95px;background:#6c6c6c;"></div>
<div class="t" style="left:1374px;width:200px;text-align:center;top:125.5px;font-size:12px;color:#f4f4f4;">Utilities</div>
<div style="left:1532px;top:124px;width:77px;height:17px;background:linear-gradient(#4b4b4b,#585858);"></div>
<div style="left:1609px;top:46px;width:1px;height:95px;background:#6c6c6c;"></div>
<div style="left:1610px;top:46px;width:1px;height:95px;background:#3c3c3c;"></div>
<div style="left:1611px;top:46px;width:1px;height:95px;background:#6c6c6c;"></div>
<div class="t" style="left:1470px;width:200px;text-align:center;top:125.5px;font-size:12px;color:#f4f4f4;">Clipboard</div>
<div style="left:1613px;top:124px;width:57px;height:17px;background:linear-gradient(#4b4b4b,#585858);"></div>
<div style="left:1670px;top:46px;width:1px;height:95px;background:#6c6c6c;"></div>
<div style="left:1671px;top:46px;width:1px;height:95px;background:#3c3c3c;"></div>
<div style="left:1672px;top:46px;width:1px;height:95px;background:#6c6c6c;"></div>
<div class="t" style="left:1528px;width:200px;text-align:center;top:125.5px;font-size:12px;color:#f4f4f4;">View</div>
<svg style="left:126.0px;top:130.75px" width="8" height="4.5"><path d="M0 0 H8 L4.0 4.5 Z" fill="#f4f4f4"/></svg>
<svg style="left:369.0px;top:130.75px" width="8" height="4.5"><path d="M0 0 H8 L4.0 4.5 Z" fill="#f4f4f4"/></svg>
<svg style="left:598.0px;top:130.75px" width="8" height="4.5"><path d="M0 0 H8 L4.0 4.5 Z" fill="#f4f4f4"/></svg>
<svg style="left:817.0px;top:130.75px" width="8" height="4.5"><path d="M0 0 H8 L4.0 4.5 Z" fill="#f4f4f4"/></svg>
<svg style="left:1032.0px;top:130.75px" width="8" height="4.5"><path d="M0 0 H8 L4.0 4.5 Z" fill="#f4f4f4"/></svg>
<svg style="left:1250.0px;top:130.75px" width="8" height="4.5"><path d="M0 0 H8 L4.0 4.5 Z" fill="#f4f4f4"/></svg>
<svg style="left:1415.0px;top:130.75px" width="8" height="4.5"><path d="M0 0 H8 L4.0 4.5 Z" fill="#f4f4f4"/></svg>
<svg style="left:1498.0px;top:130.75px" width="8" height="4.5"><path d="M0 0 H8 L4.0 4.5 Z" fill="#f4f4f4"/></svg>
<svg style="left:1645.0px;top:130.75px" width="8" height="4.5"><path d="M0 0 H8 L4.0 4.5 Z" fill="#f4f4f4"/></svg>
<svg style="left:1353px;top:129px;" width="7" height="7" viewBox="0 0 7 7"><path d="M1 1 L5.5 5.5 M2.5 5.8 H5.8 V2.5" stroke="#e8e8e8" fill="none" stroke-width="1"/></svg>
<svg style="left:1660px;top:129px;" width="7" height="7" viewBox="0 0 7 7"><path d="M1 1 L5.5 5.5 M2.5 5.8 H5.8 V2.5" stroke="#e8e8e8" fill="none" stroke-width="1"/></svg>
<svg style="left:5px;top:48px;" width="36" height="38" viewBox="0 0 36 38"><path d="M4 34 L32 6" stroke="#e9e9e9" stroke-width="1.2"/><rect x="2.0" y="33.0" width="3" height="3" fill="#6db9ee"/><rect x="31.0" y="4.0" width="3" height="3" fill="#6db9ee"/></svg>
<div class="t" style="left:-77px;width:200px;text-align:center;top:88px;font-size:12px;color:#f4f4f4;">Line</div>
<svg style="left:45px;top:48px;" width="44" height="36" viewBox="0 0 44 36"><path d="M7 28 H26 M27 28 Q37 27 37 20.5 Q37 14 27 13" stroke="#e9e9e9" stroke-width="1.2" fill="none"/><rect x="5.0" y="26.5" width="3" height="3" fill="#6db9ee"/><rect x="25.0" y="26.5" width="3" height="3" fill="#6db9ee"/><rect x="25.0" y="11.5" width="3" height="3" fill="#6db9ee"/></svg>
<div class="t" style="left:-34px;width:200px;text-align:center;top:88px;font-size:12px;color:#f4f4f4;">Polyline</div>
<svg style="left:98px;top:50px;" width="34" height="34" viewBox="0 0 34 34"><circle cx="17.5" cy="17.5" r="15" stroke="#e9e9e9" stroke-width="1.2" fill="none"/><path d="M18 17 L25 10" stroke="#6db9ee" stroke-width="1.2"/><path d="M27 8 L22 9.5 L25.5 13 Z" fill="#6db9ee"/><rect x="16.0" y="16.0" width="3" height="3" fill="#6db9ee"/></svg>
<div class="t" style="left:16px;width:200px;text-align:center;top:88px;font-size:12px;color:#f4f4f4;">Circle</div>
<svg style="left:112.5px;top:105.25px" width="6" height="3.5"><path d="M0 0 H6 L3.0 3.5 Z" fill="#f4f4f4"/></svg>
<div style="left:142px;top:49px;width:40px;height:72px;background:linear-gradient(#8a8a8a 0%,#747474 50%,#7f7f7f 51%,#858585 100%);border:1px solid #2b2b2b;"></div>
<div style="left:143px;top:86px;width:38px;height:1px;background:#2b2b2b;"></div>
<svg style="left:144px;top:50px;" width="36" height="36" viewBox="0 0 36 36"><path d="M5.5 31 Q9 8 33 4.5" stroke="#e9e9e9" stroke-width="1.2" fill="none"/><rect x="4.0" y="30.0" width="3" height="3" fill="#6db9ee"/><rect x="12.0" y="11.0" width="3" height="3" fill="#6db9ee"/><rect x="31.0" y="3.0" width="3" height="3" fill="#6db9ee"/></svg>
<div class="t" style="left:62px;width:200px;text-align:center;top:88px;font-size:12px;color:#f4f4f4;">Arc</div>
<svg style="left:158.5px;top:105.25px" width="6" height="3.5"><path d="M0 0 H6 L3.0 3.5 Z" fill="#f4f4f4"/></svg>
<svg style="left:186px;top:53px" width="18" height="18" viewBox="0 0 18 18"><rect x="2.5" y="3.5" width="13" height="9" stroke="#e9e9e9" fill="none" stroke-width="1.2"/><rect x="0.8" y="1.8" width="2.4" height="2.4" fill="#6db9ee"/><rect x="14.8" y="11.8" width="2.4" height="2.4" fill="#6db9ee"/></svg>
<svg style="left:186px;top:76px" width="18" height="18" viewBox="0 0 18 18"><ellipse cx="8" cy="9" rx="6.5" ry="4.5" stroke="#e9e9e9" fill="none" stroke-width="1.1" stroke-dasharray="9 2"/><rect x="6.9" y="7.9" width="2.2" height="2.2" fill="#6db9ee"/><rect x="13.4" y="7.9" width="2.2" height="2.2" fill="#6db9ee"/><rect x="6.9" y="3.4" width="2.2" height="2.2" fill="#6db9ee"/></svg>
<svg style="left:186px;top:100px" width="18" height="18" viewBox="0 0 18 18"><rect x="3" y="3" width="10" height="10" fill="#6db9ee" opacity=".8"/><path d="M1 3 H16 M1 13 H16 M3 1 V16 M13 1 V16" stroke="#e9e9e9" stroke-width="1.1"/></svg>
<svg style="left:209.5px;top:59.25px" width="6" height="3.5"><path d="M0 0 H6 L3.0 3.5 Z" fill="#f4f4f4"/></svg>
<svg style="left:209.5px;top:83.25px" width="6" height="3.5"><path d="M0 0 H6 L3.0 3.5 Z" fill="#f4f4f4"/></svg>
<svg style="left:209.5px;top:107.25px" width="6" height="3.5"><path d="M0 0 H6 L3.0 3.5 Z" fill="#f4f4f4"/></svg>
<svg style="left:233px;top:53px" width="16" height="16" viewBox="0 0 16 16"><path d="M8 1 V15 M1 8 H15" stroke="#e9e9e9" stroke-width="1.3"/><path d="M8 0 L5 3.5 H11 Z M8 16 L5 12.5 H11 Z M0 8 L3.5 5 V11 Z M16 8 L12.5 5 V11 Z" fill="#e9e9e9"/></svg>
<svg style="left:233px;top:77px" width="16" height="16" viewBox="0 0 16 16"><circle cx="3.5" cy="3.5" r="2.8" stroke="#e9e9e9" fill="none" stroke-width="1.1"/><circle cx="7" cy="12" r="2.8" stroke="#6db9ee" fill="none" stroke-width="1.1"/><circle cx="12.5" cy="12" r="2.8" stroke="#6db9ee" fill="none" stroke-width="1.1"/><path d="M8 3.5 H13 V7" stroke="#e9e9e9" fill="none" stroke-width="1.1"/><path d="M13 9 L10.8 6 H15.2 Z" fill="#e9e9e9"/></svg>
<svg style="left:233px;top:101px" width="16" height="16" viewBox="0 0 16 16"><path d="M5.5 1 H0.5 V15.5 H7" stroke="#e9e9e9" fill="none" stroke-width="1.1"/><path d="M9.5 1 H11.5 L15.5 15.5 H9" stroke="#6db9ee" fill="none" stroke-width="1.1"/><path d="M5.5 1 V8 M4 11.5 H9" stroke="#e9e9e9" stroke-width="1.1"/><path d="M11 11.5 L8 9.5 V13.5 Z" fill="#e9e9e9"/></svg>
<div class="t" style="left:254px;top:54px;font-size:12px;color:#f4f4f4;letter-spacing:0.219px;">Move</div>
<div class="t" style="left:254px;top:78px;font-size:12px;color:#f4f4f4;letter-spacing:-0.005px;">Copy</div>
<div class="t" style="left:254px;top:102px;font-size:12px;color:#f4f4f4;letter-spacing:-0.169px;">Stretch</div>
<svg style="left:305px;top:53px" width="16" height="16" viewBox="0 0 16 16"><path d="M11.5 3.2 A6.3 6.3 0 1 0 14.3 8.5" stroke="#e9e9e9" fill="none" stroke-width="1.3"/><path d="M9 0 L13.5 3 L9.5 6.5 Z" fill="#e9e9e9"/></svg>
<svg style="left:305px;top:77px" width="16" height="16" viewBox="0 0 16 16"><path d="M6.5 2 V14.5 H0.8 Z" stroke="#e9e9e9" fill="none" stroke-width="1.1"/><path d="M9.5 2 V14.5 H15.2 Z" stroke="#6db9ee" fill="none" stroke-width="1.1"/></svg>
<svg style="left:305px;top:101px" width="16" height="16" viewBox="0 0 16 16"><path d="M0.5 8 V0.5 H15.5 V15.5 H10.5" stroke="#6db9ee" fill="none" stroke-width="1.1"/><rect x="0.5" y="7.5" width="8" height="8" stroke="#e9e9e9" fill="none" stroke-width="1.1"/></svg>
<div class="t" style="left:326px;top:54px;font-size:12px;color:#f4f4f4;letter-spacing:-0.271px;">Rotate</div>
<div class="t" style="left:326px;top:78px;font-size:12px;color:#f4f4f4;letter-spacing:0.335px;">Mirror</div>
<div class="t" style="left:326px;top:102px;font-size:12px;color:#f4f4f4;letter-spacing:-0.754px;">Scale</div>
<svg style="left:373px;top:53px" width="16" height="16" viewBox="0 0 16 16"><path d="M0 1.5 H6 M11 1.5 H16" stroke="#6db9ee" stroke-width="1.1" stroke-dasharray="2 1"/><path d="M3.5 1.5 L11 13 M12 0.5 L8.5 11" stroke="#e9e9e9" stroke-width="1.4"/><circle cx="8.5" cy="13" r="1.8" stroke="#e9e9e9" fill="none"/><circle cx="12.5" cy="11.5" r="1.8" stroke="#e9e9e9" fill="none"/></svg>
<svg style="left:373px;top:77px" width="16" height="16" viewBox="0 0 16 16"><path d="M1.5 12 Q1.5 1.5 10 1" stroke="#6db9ee" fill="none" stroke-width="1.2"/><path d="M11.5 1 H16 M1.5 13 V16" stroke="#e9e9e9" stroke-width="1.1"/></svg>
<svg style="left:373px;top:101px" width="16" height="16" viewBox="0 0 16 16"><rect x="1.5" y="1.5" width="5" height="5" stroke="#e9e9e9" fill="none" stroke-width="1.1"/><rect x="9.5" y="1.5" width="5" height="5" stroke="#6db9ee" fill="none" stroke-width="1.1"/><rect x="1.5" y="9.5" width="5" height="5" stroke="#6db9ee" fill="none" stroke-width="1.1"/><rect x="9.5" y="9.5" width="5" height="5" stroke="#6db9ee" fill="none" stroke-width="1.1"/></svg>
<div class="t" style="left:395.5px;top:54px;font-size:12px;color:#f4f4f4;letter-spacing:-0.663px;">Trim</div>
<div class="t" style="left:395.5px;top:78px;font-size:12px;color:#f4f4f4;letter-spacing:-0.067px;">Fillet</div>
<div class="t" style="left:395.5px;top:102px;font-size:12px;color:#f4f4f4;letter-spacing:-0.168px;">Array</div>
<svg style="left:429.5px;top:59.25px" width="6" height="3.5"><path d="M0 0 H6 L3.0 3.5 Z" fill="#f4f4f4"/></svg>
<svg style="left:429.5px;top:83.25px" width="6" height="3.5"><path d="M0 0 H6 L3.0 3.5 Z" fill="#f4f4f4"/></svg>
<svg style="left:429.5px;top:107.25px" width="6" height="3.5"><path d="M0 0 H6 L3.0 3.5 Z" fill="#f4f4f4"/></svg>
<svg style="left:449px;top:53px" width="16" height="16" viewBox="0 0 16 16"><path d="M6 10.5 L13.5 1 L16 3 L9 12.5 Z" fill="#f4c06a"/><path d="M4 11.5 L6 10 L9 12.5 L7 14.5 Z" fill="#b5623c"/><path d="M0 15.5 H4" stroke="#e9e9e9"/><path d="M5 15.5 H16" stroke="#6db9ee"/></svg>
<svg style="left:449px;top:77px" width="16" height="16" viewBox="0 0 16 16"><rect x="2.5" y="6.5" width="8" height="8" stroke="#e9e9e9" fill="none" stroke-width="1.1"/><path d="M0.5 5 L5 1 H15.5 V11 L12 14.5 M15.5 1 L11 5 H0.5 V15 M11 5 V8" stroke="#6db9ee" fill="none" stroke-width="1.1"/></svg>
<svg style="left:449px;top:101px" width="16" height="16" viewBox="0 0 16 16"><path d="M16 2.5 H7 Q1 2.5 1 8 Q1 13.5 7 13.5 H16 M16 5.5 H7.5 Q4 5.5 4 8 Q4 10.5 7.5 10.5 H16" stroke="#6db9ee" fill="none" stroke-width="1.2"/></svg>
<svg style="left:486px;top:52px;" width="28" height="32" viewBox="0 0 28 32"><path d="M0.5 31 L11.5 1.5 H15.5 L26.5 31 H22.5 L19.2 22 H7.8 L4.5 31 Z M9 18.8 H18 L13.5 6 Z" fill="#e4e4e4" fill-rule="evenodd"/></svg>
<div class="t" style="left:399.5px;width:200px;text-align:center;top:88px;font-size:12px;color:#f4f4f4;">Text</div>
<svg style="left:496.0px;top:105.25px" width="6" height="3.5"><path d="M0 0 H6 L3.0 3.5 Z" fill="#f4f4f4"/></svg>
<svg style="left:534px;top:50px;" width="36" height="36" viewBox="0 0 36 36"><path d="M2.5 2 V34 M33.5 2 V34 M4 8.5 H32" stroke="#d4d4d4" stroke-width="1"/><path d="M3 8.5 L7.5 6 V11 Z M33 8.5 L28.5 6 V11 Z" fill="#d4d4d4"/><path d="M18 17.5 L16.8 23 H19.2 Z M9.5 21.5 L13.5 25.5 L14.8 24 Z M26.5 21.5 L22.5 25.5 L21.2 24 Z M6.5 29.5 L12 30 V28 Z M29.5 29.5 L24 30 V28 Z" fill="#f4c06a" stroke="#f4c06a" stroke-width=".8"/></svg>
<div class="t" style="left:452px;width:200px;text-align:center;top:88px;font-size:12px;color:#f4f4f4;">Dimension</div>
<svg style="left:589px;top:53px" width="16" height="16" viewBox="0 0 16 16"><path d="M1 1 V15 M15.5 1 V15" stroke="#e9e9e9" stroke-width="1.1"/><path d="M2.5 6 H14" stroke="#6db9ee" stroke-width="1.1"/><path d="M1.5 6 L4.5 4.5 V7.5 Z M15 6 L12 4.5 V7.5 Z" fill="#6db9ee"/></svg>
<svg style="left:589px;top:77px" width="16" height="16" viewBox="0 0 16 16"><circle cx="12" cy="4.5" r="3" stroke="#e9e9e9" fill="none" stroke-width="1.1"/><path d="M9 5.5 L6 7 L1.5 14" stroke="#e9e9e9" fill="none" stroke-width="1.1"/><path d="M0.5 15.5 L1 10.5 L4.5 13 Z" fill="#e9e9e9"/></svg>
<svg style="left:589px;top:101px" width="16" height="16" viewBox="0 0 16 16"><rect x="1" y="1.5" width="14.5" height="13" stroke="#e9e9e9" fill="none" stroke-width="1.2"/><path d="M1 5 H15.5 M1 8.2 H15.5 M1 11.4 H15.5 M6 5 V14.5 M10.7 5 V14.5" stroke="#e9e9e9" stroke-width="1"/><rect x="1" y="1.5" width="14.5" height="3.5" fill="#e9e9e9" opacity=".5"/></svg>
<div class="t" style="left:610.5px;top:54px;font-size:12px;color:#f4f4f4;letter-spacing:-0.072px;">Linear</div>
<div class="t" style="left:610.5px;top:78px;font-size:12px;color:#f4f4f4;letter-spacing:-0.473px;">Leader</div>
<div class="t" style="left:610.5px;top:102px;font-size:12px;color:#f4f4f4;letter-spacing:-0.754px;">Table</div>
<svg style="left:649.5px;top:59.25px" width="6" height="3.5"><path d="M0 0 H6 L3.0 3.5 Z" fill="#f4f4f4"/></svg>
<svg style="left:652.5px;top:83.25px" width="6" height="3.5"><path d="M0 0 H6 L3.0 3.5 Z" fill="#f4f4f4"/></svg>
<svg style="left:677px;top:51px;" width="40" height="40" viewBox="0 0 40 40"><path d="M9 1 H18 L15 4.5 H6 Z" fill="#d9d9d9"/><path d="M9 7 H18 L15 10.5 H6 Z" fill="#c9c9c9"/><path d="M9 13 H18 L15 16.5 H6 Z" fill="#d9d9d9"/><path d="M9 1.5 H31 L23 12 H1 Z" fill="#e2e2e2"/><path d="M9 13 H27 L21 21 H1 Z" fill="#d2d2d2" opacity=".95"/><path d="M9 22 H21 L17 27 H1 Z" fill="#e2e2e2"/><rect x="21.5" y="16" width="13" height="18" rx="1" fill="#f1f1f1"/><rect x="23.5" y="18.5" width="9" height="7" fill="#5fb2ee"/><path d="M24.5 28.5 H31 M31.5 28.5 L29.5 27 M24.5 31 H31 M24.5 31 L26.5 32.5" stroke="#555" stroke-width=".9" fill="none"/></svg>
<div class="t" style="left:597px;width:200px;text-align:center;top:88px;font-size:12px;color:#f4f4f4;">Layer</div>
<div class="t" style="left:597px;width:200px;text-align:center;top:103px;font-size:12px;color:#f4f4f4;">Properties</div>
<div style="left:727px;top:50px;width:208px;height:22px;background:linear-gradient(#474747,#585858);border:1px solid #2a2a2a;"></div>
<svg style="left:731px;top:53px" width="16" height="16" viewBox="0 0 16 16"><circle cx="8" cy="6.3" r="5" fill="#f4c06a"/><path d="M6 11 H10 V14 Q8 15.5 6 14 Z" fill="#f4f4f4"/></svg>
<svg style="left:749px;top:53px" width="16" height="16" viewBox="0 0 16 16"><circle cx="8" cy="8" r="4" fill="#f4c06a"/><path d="M8 0.5 V3 M8 13 V15.5 M0.5 8 H3 M13 8 H15.5 M2.7 2.7 L4.5 4.5 M11.5 11.5 L13.3 13.3 M13.3 2.7 L11.5 4.5 M2.7 13.3 L4.5 11.5" stroke="#f4c06a" stroke-width="1.2"/></svg>
<svg style="left:769px;top:52px" width="16" height="16" viewBox="0 0 16 16"><rect x="1" y="8" width="10" height="8" fill="#f4c06a"/><path d="M8.5 8 V4.5 Q8.5 1.5 11.5 1.5 Q14.5 1.5 14.5 4.5 V6" stroke="#f4c06a" fill="none" stroke-width="1.6"/><rect x="5.2" y="10.5" width="1.6" height="3" fill="#444"/></svg>
<div style="left:790px;top:55px;width:14px;height:14px;background:#00f000;border:1px solid #0a0a0a;"></div>
<div class="t" style="left:809.5px;top:54px;font-size:12px;color:#f4f4f4;letter-spacing:-0.403px;">Text leader</div>
<svg style="left:924.0px;top:58.75px" width="8" height="4.5"><path d="M0 0 H8 L4.0 4.5 Z" fill="#f4f4f4"/></svg>
<svg style="left:730px;top:77px" width="16" height="16" viewBox="0 0 16 16"><path d="M5.5 2 H13.5 L9.5 6.5 H1 Z" fill="#d6d6d6"/><circle cx="12" cy="10" r="3.2" fill="#7fd0f2"/><rect x="10.6" y="13" width="2.8" height="2.5" fill="#eee"/></svg>
<svg style="left:754px;top:77px" width="16" height="16" viewBox="0 0 16 16"><path d="M5 1 H13 L10 4 H2 Z" fill="#d6d6d6"/><path d="M3.5 5 H11.5 L9.5 7.2 H1.5 Z" fill="#d6d6d6"/><path d="M2.5 8.2 H10.5 L9 10.2 H0.8 Z" fill="#6db9ee"/><path d="M15.5 9.5 L10.5 14.5" stroke="#e9e9e9" stroke-width="1.2"/><path d="M9.5 15.5 L10 12 L13 15 Z" fill="#e9e9e9"/></svg>
<svg style="left:778px;top:77px" width="16" height="16" viewBox="0 0 16 16"><path d="M5.5 2 H13.5 L9.5 6.5 H1 Z" fill="#d6d6d6"/><path d="M11.5 7 V15 M8 9 L15 13 M15 9 L8 13" stroke="#6db9ee" stroke-width="1.2"/></svg>
<svg style="left:802px;top:77px" width="16" height="16" viewBox="0 0 16 16"><path d="M5.5 2 H13.5 L9.5 6.5 H1 Z" fill="#d6d6d6"/><rect x="9" y="10.5" width="6.5" height="5" fill="#6db9ee"/><path d="M10.5 10.5 V8.8 Q12.2 6.5 14 8.8 V10.5" stroke="#6db9ee" fill="none" stroke-width="1.2"/></svg>
<svg style="left:827px;top:76px" width="17" height="17" viewBox="0 0 17 17"><circle cx="8.5" cy="3.3" r="2.8" fill="#d0d0d0"/><path d="M5 5.5 H16 L12 9.5 H1 Z" fill="#6db9ee"/><path d="M3.5 10 H13 L11 12 H1.5 Z M3 13 H12 L10.5 15 H1 Z" fill="#d6d6d6"/></svg>
<svg style="left:730px;top:101px" width="16" height="16" viewBox="0 0 16 16"><path d="M5 1 H13 L10 4 H2 Z" fill="#d6d6d6"/><path d="M3.5 5 H11.5 L9.5 7.2 H1.5 Z" fill="#d6d6d6"/><path d="M2.5 8.2 H10.5 L9 10.2 H0.8 Z" fill="#d6d6d6"/><circle cx="12" cy="10" r="3.2" fill="#f4c06a"/><rect x="10.6" y="13" width="2.8" height="2.5" fill="#eee"/></svg>
<svg style="left:754px;top:101px" width="16" height="16" viewBox="0 0 16 16"><path d="M5 1 H13 L10 4 H2 Z" fill="#d6d6d6"/><path d="M3.5 5 H11.5 L9.5 7.2 H1.5 Z" fill="#d6d6d6"/><path d="M2.5 8.2 H10.5 L9 10.2 H0.8 Z" fill="#6db9ee"/><path d="M10 15 L15 10" stroke="#e9e9e9" stroke-width="1.2"/><path d="M16 9 L15.5 12.5 L12.5 9.5 Z" fill="#e9e9e9"/></svg>
<svg style="left:778px;top:101px" width="16" height="16" viewBox="0 0 16 16"><path d="M5 1 H13 L10 4 H2 Z" fill="#d6d6d6"/><path d="M3.5 5 H11.5 L9.5 7.2 H1.5 Z" fill="#d6d6d6"/><path d="M2.5 8.2 H10.5 L9 10.2 H0.8 Z" fill="#d6d6d6"/><circle cx="11.5" cy="11.5" r="2.3" fill="#f4c06a"/><circle cx="11.5" cy="11.5" r="4.2" stroke="#f4c06a" fill="none" stroke-width="1.2" stroke-dasharray="1.2 2.1"/></svg>
<svg style="left:802px;top:101px" width="16" height="16" viewBox="0 0 16 16"><path d="M5.5 2 H13.5 L9.5 6.5 H1 Z" fill="#d6d6d6"/><rect x="8" y="10.5" width="6.5" height="5" fill="#f4c06a"/><path d="M11.5 10.5 V8.5 Q13.2 6.2 15 8.5 V9.5" stroke="#f4c06a" fill="none" stroke-width="1.2"/></svg>
<svg style="left:827px;top:100px" width="17" height="17" viewBox="0 0 17 17"><path d="M5 1 H13 L10 4 H2 Z M3.5 5 H11.5 L9.5 7.2 H1.5 Z M2.5 8.2 H8 L7 10.2 H0.8 Z" fill="#d6d6d6"/><path d="M7.5 11.5 L12 7 L16 11 L11.5 15.5 Z" fill="#f4c06a"/><path d="M12 7 L13.5 5.5 L17 9.5 L16 11 Z" fill="#eee"/></svg>
<div class="t" style="left:848.5px;top:78px;font-size:12px;color:#f4f4f4;letter-spacing:-0.063px;">Make Current</div>
<div class="t" style="left:848.5px;top:102px;font-size:12px;color:#f4f4f4;letter-spacing:-0.103px;">Match Layer</div>
<svg style="left:942px;top:49px;" width="36" height="36" viewBox="0 0 36 36"><path d="M16 1 H30 L33 4 V24 H16 Z" fill="#7cc4f4"/><path d="M30 1 V4 H33 Z" fill="#d8ecfa"/><rect x="1.5" y="12.5" width="22" height="14" fill="#7b7b7b" stroke="#d9d9d9" stroke-width="1.1"/><circle cx="23.5" cy="25" r="7.3" fill="#8a8a8a" fill-opacity=".8" stroke="#d9d9d9" stroke-width="1.1"/><rect x="0" y="25" width="3" height="3" fill="#d9d9d9"/></svg>
<div class="t" style="left:859.5px;width:200px;text-align:center;top:87px;font-size:12px;color:#f4f4f4;">Insert</div>
<svg style="left:956.0px;top:104.25px" width="6" height="3.5"><path d="M0 0 H6 L3.0 3.5 Z" fill="#f4f4f4"/></svg>
<svg style="left:983px;top:52px" width="17" height="17" viewBox="0 0 17 17"><rect x="1.5" y="5.5" width="9" height="7" fill="#7b7b7b" stroke="#d9d9d9"/><circle cx="11" cy="12" r="3.2" fill="none" stroke="#cfe0d8" stroke-width="1"/><rect x="0.5" y="11.5" width="2" height="2" fill="#d9d9d9"/><path d="M12 0 L13 3 L16 2 L14.5 4.5 L17 6 L14 6.5 L14 9.5 L12 7.5 L10 9.5 L10 6.5 L7 6 L9.5 4.5 L8 2 L11 3 Z" fill="#f4c06a"/></svg>
<svg style="left:983px;top:76px" width="17" height="17" viewBox="0 0 17 17"><rect x="1.5" y="5.5" width="9" height="7" fill="#7b7b7b" stroke="#d9d9d9"/><circle cx="11" cy="12" r="3.2" fill="none" stroke="#cfe0d8" stroke-width="1"/><rect x="0.5" y="11.5" width="2" height="2" fill="#d9d9d9"/><path d="M8 9 L9 6 L14 1 L16.5 3.5 L11.5 8.5 Z" fill="#f4c06a"/><path d="M13 2 L14.5 0.5 L17 3 L15.5 4.5 Z" fill="#b5623c"/></svg>
<svg style="left:983px;top:100px" width="17" height="17" viewBox="0 0 17 17"><path d="M1 2 H8 L14 8 L7.5 15 L1 9 Z" fill="#e6e6e6"/><circle cx="4" cy="5" r="1.2" fill="#555"/><path d="M4 8 L7 11 M6 6 L9 9" stroke="#88a" stroke-width=".8"/><path d="M8 9 L9 6 L14 1 L16.5 3.5 L11.5 8.5 Z" fill="#f4c06a"/><path d="M13 2 L14.5 0.5 L17 3 L15.5 4.5 Z" fill="#b5623c"/></svg>
<div class="t" style="left:1004.5px;top:54px;font-size:12px;color:#f4f4f4;letter-spacing:-0.404px;">Create</div>
<div class="t" style="left:1004.5px;top:78px;font-size:12px;color:#f4f4f4;letter-spacing:-0.226px;">Edit</div>
<div class="t" style="left:1004.5px;top:102px;font-size:12px;color:#f4f4f4;letter-spacing:0.021px;">Edit Attributes</div>
<svg style="left:1086.5px;top:107.25px" width="6" height="3.5"><path d="M0 0 H6 L3.0 3.5 Z" fill="#f4f4f4"/></svg>
<svg style="left:1113px;top:51px;" width="36" height="36" viewBox="0 0 36 36"><rect x="3" y="1" width="20" height="28" fill="#dcdcdc"/><rect x="6" y="4" width="12.5" height="9.5" fill="#79c3f3"/><path d="M6 19 H17 M6 24 H13 M10 17 V21 M13.5 22 V26" stroke="#555" stroke-width="1"/><path d="M17 24 L24 18 L31 27 L24 33 Z" fill="#f4c06a"/><path d="M21 20.5 L23.5 18 L30.5 26 L28 28.5" fill="#f1f1f1"/><path d="M24 18 L29 14 L31 16 L27 21 Z" fill="#f1f1f1"/></svg>
<div class="t" style="left:1031.5px;width:200px;text-align:center;top:88px;font-size:12px;color:#f4f4f4;">Match</div>
<div class="t" style="left:1031.5px;width:200px;text-align:center;top:103px;font-size:12px;color:#f4f4f4;">Properties</div>
<svg style="left:1163px;top:52px" width="16" height="16" viewBox="0 0 16 16"><path d="M8 8 L8.00 0.00 A8 8 0 0 1 13.66 2.34 Z" fill="#e8c84a"/><path d="M8 8 L13.66 2.34 A8 8 0 0 1 16.00 8.00 Z" fill="#c98a4c"/><path d="M8 8 L16.00 8.00 A8 8 0 0 1 13.66 13.66 Z" fill="#c0526e"/><path d="M8 8 L13.66 13.66 A8 8 0 0 1 8.00 16.00 Z" fill="#a04cc0"/><path d="M8 8 L8.00 16.00 A8 8 0 0 1 2.34 13.66 Z" fill="#4c78c8"/><path d="M8 8 L2.34 13.66 A8 8 0 0 1 0.00 8.00 Z" fill="#4cb8b0"/><path d="M8 8 L0.00 8.00 A8 8 0 0 1 2.34 2.34 Z" fill="#62c060"/><path d="M8 8 L2.34 2.34 A8 8 0 0 1 8.00 0.00 Z" fill="#b8cc50"/></svg>
<svg style="left:1163px;top:76px" width="16" height="16" viewBox="0 0 16 16"><rect x="0" y="0.5" width="16" height="1.5" fill="#e2e2e2"/><rect x="0" y="4" width="16" height="2.3" fill="#e2e2e2"/><rect x="0" y="8" width="16" height="3" fill="#e2e2e2"/><rect x="0" y="12.5" width="16" height="3.5" fill="#e2e2e2"/></svg>
<svg style="left:1163px;top:100px" width="16" height="16" viewBox="0 0 16 16"><path d="M0 1.5 H16" stroke="#e2e2e2" stroke-dasharray="1 1"/><path d="M0 5 H16" stroke="#e2e2e2" stroke-dasharray="3 1"/><path d="M0 8.5 H16" stroke="#e2e2e2" stroke-dasharray="5 1 1 1"/><path d="M0 12 H16" stroke="#e2e2e2" stroke-dasharray="4 1.5"/><path d="M0 15 H16" stroke="#e2e2e2" stroke-dasharray="2 1"/></svg>
<div style="left:1181px;top:50px;width:180px;height:22px;background:linear-gradient(#474747,#595959);border:1px solid #2a2a2a;"></div>
<svg style="left:1350.5px;top:58.75px" width="8" height="4.5"><path d="M0 0 H8 L4.0 4.5 Z" fill="#f4f4f4"/></svg>
<div style="left:1181px;top:74px;width:180px;height:21px;background:linear-gradient(#474747,#595959);border:1px solid #2a2a2a;"></div>
<svg style="left:1350.5px;top:82.75px" width="8" height="4.5"><path d="M0 0 H8 L4.0 4.5 Z" fill="#f4f4f4"/></svg>
<div style="left:1181px;top:98px;width:180px;height:21px;background:linear-gradient(#474747,#595959);border:1px solid #2a2a2a;"></div>
<svg style="left:1350.5px;top:106.75px" width="8" height="4.5"><path d="M0 0 H8 L4.0 4.5 Z" fill="#f4f4f4"/></svg>
<div style="left:1194px;top:53px;width:16px;height:16px;background:#00f000;border:1px solid #b8a0b0;"></div>
<div class="t" style="left:1220px;top:54px;font-size:12px;color:#f4f4f4;letter-spacing:-0.504px;">ByLayer</div>
<div style="left:1185px;top:83.5px;width:64px;height:1px;background:#f0f0f0;"></div>
<div class="t" style="left:1251px;top:77px;font-size:12px;color:#f4f4f4;letter-spacing:-0.504px;">ByLayer</div>
<div style="left:1185px;top:107.5px;width:64px;height:1px;background:#f0f0f0;"></div>
<div class="t" style="left:1251px;top:101px;font-size:12px;color:#f4f4f4;letter-spacing:-0.504px;">ByLayer</div>
<svg style="left:1368px;top:52px;" width="36" height="36" viewBox="0 0 36 36"><path d="M6 4 H1.5 V30 H6 M18 17 H22.5 V30 H18" stroke="#e2e2e2" fill="none" stroke-width="1.6"/><path d="M7 8 H10 V10.5 H16 V16 H7 Z" fill="#6db9ee"/><circle cx="12" cy="24" r="4.5" fill="#8d8d8d" stroke="#c9c9c9" stroke-width="1.2"/><path d="M24 -1 L25.7 4.5 L30.5 2 L28.3 7 L33.5 9 L28.3 11 L30.5 16 L25.7 13.5 L24 19 L22.3 13.5 L17.5 16 L19.7 11 L14.5 9 L19.7 7 L17.5 2 L22.3 4.5 Z" fill="#f4c06a"/></svg>
<div class="t" style="left:1285.5px;width:200px;text-align:center;top:88px;font-size:12px;color:#f4f4f4;">Group</div>
<svg style="left:1410px;top:52px" width="16" height="16" viewBox="0 0 16 16"><rect x="2" y="2" width="4" height="4" stroke="#6db9ee" fill="none"/><circle cx="4" cy="11" r="2.2" stroke="#d0d0d0" fill="none"/><path d="M10 1 H14 V15 H10" stroke="#e2e2e2" fill="none" stroke-width="1.1"/><path d="M9 5.5 L14.5 11 M14.5 5.5 L9 11" stroke="#e0664a" stroke-width="1.4"/></svg>
<svg style="left:1410px;top:76px" width="17" height="17" viewBox="0 0 17 17"><path d="M4 1 H1 V15 H4 M9 1 H12 V6" stroke="#e2e2e2" fill="none" stroke-width="1.1"/><rect x="4" y="3.5" width="3.5" height="3.5" stroke="#6db9ee" fill="none"/><circle cx="6" cy="11.5" r="2" stroke="#d0d0d0" fill="none"/><path d="M8.5 15 L9.5 12 L14 7.5 L16.5 10 L12 14.5 Z" fill="#f4c06a"/><path d="M13.5 8 L15 6.5 L17.5 9 L16 10.5 Z" fill="#b5623c"/></svg>
<div style="left:1407px;top:98px;width:23px;height:22px;background:linear-gradient(#3363ae,#4f88d2);border:1px solid #27467c;"></div>
<svg style="left:1410px;top:101px" width="18" height="18" viewBox="0 0 18 18"><path d="M4 1 H1 V14 H4" stroke="#f2f2f2" fill="none" stroke-width="1.2"/><rect x="4.5" y="3" width="3.5" height="3.5" stroke="#8fd08a" fill="none"/><circle cx="6.2" cy="10.5" r="1.9" stroke="#8fd08a" fill="none"/><path d="M9 4 V15.5 L11.5 13 L13.5 17 L15 16.2 L13.2 12.5 H16.5 Z" fill="#fff" stroke="#222" stroke-width=".5"/></svg>
<svg style="left:1452px;top:54px;" width="34" height="26" viewBox="0 0 34 26"><path d="M2 4 V13 M30 4 V13 M3 8.5 H29" stroke="#e2e2e2" stroke-width="1"/><path d="M2.5 8.5 L6.5 6.3 V10.7 Z M29.5 8.5 L25.5 6.3 V10.7 Z" fill="#e2e2e2"/><rect x="2" y="14" width="28.5" height="7" fill="#f4c06a"/><path d="M5 14 V17 M8 14 V16 M11 14 V17 M14 14 V16 M17 14 V17 M20 14 V16 M23 14 V17 M26 14 V16" stroke="#8a6a30" stroke-width=".8"/></svg>
<div class="t" style="left:1368.5px;width:200px;text-align:center;top:88px;font-size:12px;color:#f4f4f4;">Measure</div>
<svg style="left:1465.5px;top:105.25px" width="6" height="3.5"><path d="M0 0 H6 L3.0 3.5 Z" fill="#f4f4f4"/></svg>
<svg style="left:1506px;top:52px" width="18" height="18" viewBox="0 0 18 18"><path d="M1 3 V14 L3.8 11.5 L6 15.5 L7.5 14.7 L5.6 11 H9 Z" fill="#fff" stroke="#333" stroke-width=".5"/><rect x="8" y="7" width="9" height="8" fill="#e8e8e8"/><path d="M9.5 9 H15.5 M9.5 11 H15.5 M9.5 13 H15.5" stroke="#5a7fb0" stroke-width=".9"/><path d="M10 0 L13.5 0 L11.5 3 H14 L9.5 7 L10.8 3.8 H8.5 Z" fill="#f4c06a"/></svg>
<svg style="left:1506px;top:76px" width="18" height="18" viewBox="0 0 18 18"><rect x="1" y="1" width="13" height="13" fill="#5f8f7a" stroke="#9fd0b0" stroke-dasharray="2 1"/><rect x="4" y="4" width="7" height="7" fill="#8fc8a8"/><path d="M9 5 V16 L11.5 13.7 L13.3 17 L14.8 16.3 L13 13 H16.3 Z" fill="#fff" stroke="#222" stroke-width=".5"/></svg>
<svg style="left:1507px;top:101px" width="16" height="16" viewBox="0 0 16 16"><rect x="2" y="0.5" width="12" height="15" fill="#e4e4e4"/><rect x="3.5" y="2" width="9" height="3" fill="#555"/><rect x="3.5" y="6.5" width="2.3" height="2" fill="#555"/><rect x="3.5" y="9.5" width="2.3" height="2" fill="#555"/><rect x="3.5" y="12.5" width="2.3" height="2" fill="#555"/><rect x="6.8" y="6.5" width="2.3" height="2" fill="#555"/><rect x="6.8" y="9.5" width="2.3" height="2" fill="#555"/><rect x="6.8" y="12.5" width="2.3" height="2" fill="#555"/><rect x="10.1" y="6.5" width="2.3" height="2" fill="#555"/><rect x="10.1" y="9.5" width="2.3" height="2" fill="#555"/><rect x="10.1" y="12.5" width="2.3" height="2" fill="#555"/></svg>
<svg style="left:1541px;top:50px;" width="34" height="36" viewBox="0 0 34 36"><rect x="3" y="4" width="22" height="25" rx="1" fill="#e8a45a"/><rect x="9" y="1.5" width="10" height="6" rx="1" fill="#eee"/><circle cx="14" cy="2.5" r="1.8" fill="#eee"/><path d="M14 12 H24.5 L29 16.5 V33 H14 Z" fill="#f0f0f0"/><path d="M24.5 12 V16.5 H29 Z" fill="#cfcfcf"/></svg>
<div class="t" style="left:1457px;width:200px;text-align:center;top:88px;font-size:12px;color:#f4f4f4;">Paste</div>
<svg style="left:1554.0px;top:105.25px" width="6" height="3.5"><path d="M0 0 H6 L3.0 3.5 Z" fill="#f4f4f4"/></svg>
<svg style="left:1586px;top:52px" width="18" height="18" viewBox="0 0 18 18"><path d="M1 2 H10 M1 5 H10 M1 8 H7 M1 11 H6 M1 2 V11" stroke="#e2e2e2" stroke-width="1.1" fill="none"/><path d="M9 5 L14 13 M15 5 L10 13" stroke="#e2e2e2" stroke-width="1.2"/><circle cx="9.5" cy="14.5" r="1.8" stroke="#e2e2e2" fill="none"/><circle cx="14.5" cy="14.5" r="1.8" stroke="#e2e2e2" fill="none"/></svg>
<svg style="left:1587px;top:76px" width="18" height="18" viewBox="0 0 18 18"><path d="M1 1 H7 L10 4 V12 H1 Z" fill="#d6d6d6"/><path d="M5.5 5 H11.5 L14.5 8 V16.5 H5.5 Z" fill="#ededed" stroke="#5d5d5d" stroke-width=".8"/></svg>
<svg style="left:1624px;top:55px;" width="34" height="26" viewBox="0 0 34 26"><path d="M0.5 0.5 H14.5 V10.5 H32.5 V24.5 H0.5 Z" fill="#e6e6e6"/></svg>
<div class="t" style="left:1541.5px;width:200px;text-align:center;top:88px;font-size:12px;color:#f4f4f4;">Base</div>
<svg style="left:1638.5px;top:105.25px" width="6" height="3.5"><path d="M0 0 H6 L3.0 3.5 Z" fill="#f4f4f4"/></svg>
<div style="left:0px;top:144px;width:1919px;height:29px;background:#393939;"></div>
<svg style="left:0px;top:144px;" width="1919" height="29" viewBox="0 0 1919 29"><defs><linearGradient id="tg" x1="0" y1="0" x2="0" y2="1"><stop offset="0" stop-color="#555"/><stop offset="1" stop-color="#4c4c4c"/></linearGradient><linearGradient id="ta" x1="0" y1="0" x2="0" y2="1"><stop offset="0" stop-color="#8e8e8e"/><stop offset="1" stop-color="#606060"/></linearGradient></defs><rect x="0" y="24" width="1919" height="5" fill="#505050"/><path d="M0 0 H24 C16 4 18 22 8 24 H0 Z" fill="#2e2e2e"/><path d="M15 26 C21 25 20 4 29 3.5 H136 C145 4 144 25 150 26 Z" fill="url(#tg)" stroke="#434343" stroke-width=".8"/><path d="M138 26 C144 25 143 4 152 3.5 H259 C268 4 267 25 273 26 Z" fill="url(#tg)" stroke="#434343" stroke-width=".8"/><path d="M248 11 L254 17 M254 11 L248 17" stroke="#2f2f2f" stroke-width="1.8"/><path d="M261 26 C267 25 266 4 275 3.5 H387 C396 4 395 25 401 26 Z" fill="url(#tg)" stroke="#434343" stroke-width=".8"/><path d="M376 11 L382 17 M382 11 L376 17" stroke="#2f2f2f" stroke-width="1.8"/><path d="M389 26 C395 25 394 4 403 3.5 H510 C519 4 518 25 524 26 Z" fill="url(#tg)" stroke="#434343" stroke-width=".8"/><path d="M499 11 L505 17 M505 11 L499 17" stroke="#2f2f2f" stroke-width="1.8"/><path d="M512 26 C518 25 517 4 526 3.5 H633 C642 4 641 25 647 26 Z" fill="url(#tg)" stroke="#434343" stroke-width=".8"/><path d="M622 11 L628 17 M628 11 L622 17" stroke="#2f2f2f" stroke-width="1.8"/><path d="M635 26 C641 25 640 4 649 3.5 H767 C776 4 775 25 781 26 Z" fill="url(#tg)" stroke="#434343" stroke-width=".8"/><path d="M756 11 L762 17 M762 11 L756 17" stroke="#2f2f2f" stroke-width="1.8"/><path d="M769 26 C775 25 774 4 783 3.5 H912 C921 4 920 25 926 26 Z" fill="url(#tg)" stroke="#434343" stroke-width=".8"/><path d="M901 11 L907 17 M907 11 L901 17" stroke="#2f2f2f" stroke-width="1.8"/><path d="M914 26 C920 25 919 4 928 3.5 H1048 C1057 4 1056 25 1062 26 Z" fill="url(#tg)" stroke="#434343" stroke-width=".8"/><path d="M1037 11 L1043 17 M1043 11 L1037 17" stroke="#2f2f2f" stroke-width="1.8"/><path d="M1050 26 C1056 25 1055 4 1064 3.5 H1171 C1180 4 1179 25 1185 26 Z" fill="url(#tg)" stroke="#434343" stroke-width=".8"/><path d="M1160 11 L1166 17 M1166 11 L1160 17" stroke="#2f2f2f" stroke-width="1.8"/><path d="M1173 26 C1179 25 1178 4 1187 3.5 H1294 C1303 4 1302 25 1308 26 Z" fill="url(#tg)" stroke="#434343" stroke-width=".8"/><path d="M1283 11 L1289 17 M1289 11 L1283 17" stroke="#2f2f2f" stroke-width="1.8"/><path d="M1296 26 C1302 25 1301 4 1310 3.5 H1424 C1433 4 1432 25 1438 26 Z" fill="url(#tg)" stroke="#434343" stroke-width=".8"/><path d="M1413 11 L1419 17 M1419 11 L1413 17" stroke="#2f2f2f" stroke-width="1.8"/><path d="M1426 26 C1432 25 1431 4 1440 3.5 H1566 C1575 4 1574 25 1580 26 Z" fill="url(#tg)" stroke="#434343" stroke-width=".8"/><path d="M1555 11 L1561 17 M1561 11 L1555 17" stroke="#2f2f2f" stroke-width="1.8"/><path d="M1568 26 C1574 25 1573 4 1582 3.5 H1720 C1729 4 1728 25 1734 26 Z" fill="url(#tg)" stroke="#434343" stroke-width=".8"/><path d="M1709 11 L1715 17 M1715 11 L1709 17" stroke="#2f2f2f" stroke-width="1.8"/><path d="M1722 26 C1728 25 1727 4 1736 3.5 H1844 C1853 4 1852 25 1858 26 Z" fill="url(#ta)" stroke="#434343" stroke-width=".8"/><path d="M1833 11 L1839 17 M1839 11 L1833 17" stroke="#3a3a3a" stroke-width="1.8"/><rect x="0" y="25.5" width="1919" height="3.5" fill="#595959"/><path d="M1856 5 H1874 Q1879 6 1883 21 H1865 Q1860 20 1856 5 Z" fill="#555"/><path d="M1864 13.5 H1874 M1869 8.5 V18.5" stroke="#e6e6e6" stroke-width="1.8"/><path d="M1903 8 L1906 11 L1909 8 M1903 13.5 L1906 16.5 L1909 13.5" stroke="#d8d8d8" stroke-width="1.6" fill="none"/></svg>
<div class="t" style="left:31px;top:152px;font-size:12px;color:#d2d2d2;letter-spacing:0.415px;">Start</div>
<div class="t" style="left:155px;top:152px;font-size:12px;color:#d2d2d2;letter-spacing:0.039px;">Lift Are*</div>
<div class="t" style="left:278px;top:152px;font-size:12px;color:#d2d2d2;letter-spacing:-0.028px;">Master bedroom</div>
<div class="t" style="left:406px;top:152px;font-size:12px;color:#d2d2d2;letter-spacing:-0.614px;">MEJA 2*</div>
<div class="t" style="left:529px;top:152px;font-size:12px;color:#d2d2d2;letter-spacing:-0.802px;">MEJA 3</div>
<div class="t" style="left:652px;top:152px;font-size:12px;color:#d2d2d2;letter-spacing:-0.834px;">MEJA COMPUTER</div>
<div class="t" style="left:786px;top:152px;font-size:12px;color:#d2d2d2;letter-spacing:-0.691px;">MEJA COMPUTER-2</div>
<div class="t" style="left:931px;top:152px;font-size:12px;color:#d2d2d2;letter-spacing:-0.358px;">MEJA Meja Rapat*</div>
<div class="t" style="left:1067px;top:152px;font-size:12px;color:#d2d2d2;letter-spacing:-0.902px;">MEJA RAPAT*</div>
<div class="t" style="left:1190px;top:152px;font-size:12px;color:#d2d2d2;letter-spacing:-0.918px;">MEJA RIAS</div>
<div class="t" style="left:1313px;top:152px;font-size:12px;color:#d2d2d2;letter-spacing:-0.717px;">MEJA TULIS LAB*</div>
<div class="t" style="left:1443px;top:152px;font-size:12px;color:#d2d2d2;letter-spacing:-0.811px;">MEJA WASHTAFEL*</div>
<div class="t" style="left:1585px;top:152px;font-size:12px;color:#d2d2d2;letter-spacing:-0.689px;">MEJA WASHTAFEL-1*</div>
<div class="t" style="left:1739px;top:152px;font-size:12px;color:#fafafa;letter-spacing:-0.002px;">mirror panel</div>
<div style="left:0px;top:1003px;width:1919px;height:30px;background:#3b3b3b;"></div>
<div style="left:0px;top:1003px;width:1919px;height:1px;background:#4a4a4a;"></div>
<div style="left:0px;top:1031px;width:1919px;height:1px;background:#403b3a;"></div>
<div style="left:0px;top:1032px;width:1919px;height:1px;background:#68493f;"></div>
<svg style="left:0px;top:1003px;" width="160" height="20" viewBox="0 0 160 20"><defs><linearGradient id="lg" x1="0" y1="0" x2="0" y2="1"><stop offset="0" stop-color="#5a5f60"/><stop offset="1" stop-color="#8a8c8c"/></linearGradient></defs><path d="M4 0 C13 1 12 17 19 17.5 H62 C68 17 66 1 72 0 Z" fill="url(#lg)"/><path d="M68 0 C75 1 74 17 80 17.5 H118 C124 17 122 1 130 0 Z" fill="#5a5a5a"/><path d="M133 1 H150 Q152 2 149 10 Q147 16 143 16.5 H128 Q130 4 133 1 Z" fill="#505050"/><path d="M136 9.5 H144 M140 5.5 V13.5" stroke="#e8e8e8" stroke-width="1.6"/></svg>
<div class="t" style="left:23px;top:1005px;font-size:12.5px;color:#ffffff;letter-spacing:-0.152px;font-weight:bold;">Model</div>
<div class="t" style="left:81.5px;top:1005px;font-size:12.5px;color:#c8c8c8;letter-spacing:-1.250px;">PRINT</div>
<div style="left:1357px;top:1004px;width:49px;height:27px;border:1px solid #5b5b5b;background:#404040;"></div>
<div style="left:1408px;top:1004px;width:64px;height:27px;border:1px solid #5b5b5b;background:#404040;"></div>
<div style="left:1474px;top:1004px;width:167px;height:27px;border:1px solid #5b5b5b;background:#404040;"></div>
<div style="left:1643px;top:1004px;width:105px;height:27px;border:1px solid #5b5b5b;background:#404040;"></div>
<div style="left:1750px;top:1004px;width:40px;height:27px;border:1px solid #5b5b5b;background:#404040;"></div>
<div style="left:1791px;top:1004px;width:25px;height:27px;border:1px solid #5b5b5b;background:#404040;"></div>
<div style="left:1818px;top:1004px;width:24px;height:27px;border:1px solid #5b5b5b;background:#404040;"></div>
<div style="left:1844px;top:1004px;width:23px;height:27px;border:1px solid #5b5b5b;background:#404040;"></div>
<div style="left:1869px;top:1004px;width:25px;height:27px;border:1px solid #5b5b5b;background:#404040;"></div>
<div style="left:1895px;top:1004px;width:26px;height:27px;border:1px solid #5b5b5b;background:#404040;"></div>
<div class="t" style="left:1361px;top:1009px;font-size:12.5px;color:#f2f2f2;letter-spacing:-0.863px;">MODEL</div>
<svg style="left:0px;top:0px;" width="1919" height="1033" viewBox="0 0 1919 1033"><path d="M1414 1013.5 H1426 M1414 1019.5 H1426 M1417 1009 V1023 M1423 1009 V1023" stroke="#e8e8e8" stroke-width="1"/><rect x="1438.5" y="1011.0" width="1.6" height="1.6" fill="#e8e8e8"/><rect x="1438.5" y="1015.5" width="1.6" height="1.6" fill="#e8e8e8"/><rect x="1438.5" y="1020.0" width="1.6" height="1.6" fill="#e8e8e8"/><rect x="1443.0" y="1011.0" width="1.6" height="1.6" fill="#e8e8e8"/><rect x="1443.0" y="1015.5" width="1.6" height="1.6" fill="#e8e8e8"/><rect x="1443.0" y="1020.0" width="1.6" height="1.6" fill="#e8e8e8"/><rect x="1447.5" y="1011.0" width="1.6" height="1.6" fill="#e8e8e8"/><rect x="1447.5" y="1015.5" width="1.6" height="1.6" fill="#e8e8e8"/><rect x="1447.5" y="1020.0" width="1.6" height="1.6" fill="#e8e8e8"/><path d="M1460.5 1015 H1466.5 L1463.5 1018.5 Z" fill="#e8e8e8"/><path d="M1480.5 1009 V1022.5 H1492" stroke="#e8e8e8" fill="none" stroke-width="1"/><path d="M1480.5 1018 H1485 V1022.5" stroke="#e8e8e8" fill="none" stroke-width="1"/><rect x="1499" y="1006" width="22" height="23" fill="#5b96d4"/><circle cx="1508.5" cy="1019" r="5" stroke="#fff" fill="none" stroke-width="1.3"/><path d="M1508.5 1019 H1518 M1508.5 1019 L1515 1010" stroke="#fff" stroke-width="1.2"/><path d="M1526 1015 H1532 L1529 1018.5 Z" fill="#e8e8e8"/><path d="M1548.5 1008 V1026" stroke="#8fd08a" stroke-width="1.1"/><path d="M1543 1009 L1554 1024" stroke="#e06040" stroke-width="1"/><rect x="1547.3" y="1015.3" width="2.4" height="2.4" fill="#e8e8e8"/><path d="M1565 1015 H1571 L1568 1018.5 Z" fill="#e8e8e8"/><rect x="1578" y="1006" width="22" height="23" fill="#5b96d4"/><path d="M1581 1024.5 H1597 M1582 1024.5 L1596 1011" stroke="#fff" stroke-width="1.3"/><rect x="1586.5" y="1017.5" width="3" height="3" fill="#fff"/><rect x="1602" y="1006" width="22" height="23" fill="#5b96d4"/><rect x="1607.5" y="1012.5" width="12" height="12" stroke="#fff" fill="none" stroke-width="1.2"/><rect x="1604.5" y="1009.5" width="5" height="5" fill="#5b96d4" stroke="#fff"/><path d="M1629 1015 H1635 L1632 1018.5 Z" fill="#e8e8e8"/><rect x="1645" y="1006" width="22" height="23" fill="#5b96d4"/><path d="M1654 1009 L1660 1025 L1654 1020 L1648 1025 Z" fill="#fff"/><circle cx="1661.5" cy="1011.5" r="1.8" stroke="#fff" fill="none" stroke-width="1"/><path d="M1677 1009 L1683 1025 L1677 1020 L1671 1025 Z" fill="#d0d0d0"/><path d="M1683 1008 L1681 1012 H1684 L1681.5 1016" stroke="#d0d0d0" fill="none" stroke-width="1"/><path d="M1703 1009 L1709 1025 L1703 1020 L1697 1025 Z" fill="#d0d0d0"/><path d="M1737.5 1015 H1743.5 L1740.5 1018.5 Z" fill="#e8e8e8"/><rect x="-1.6" y="-7.2" width="3.2" height="4" fill="#e8e8e8" transform="translate(1762.5 1017) rotate(0)"/><rect x="-1.6" y="-7.2" width="3.2" height="4" fill="#e8e8e8" transform="translate(1762.5 1017) rotate(45)"/><rect x="-1.6" y="-7.2" width="3.2" height="4" fill="#e8e8e8" transform="translate(1762.5 1017) rotate(90)"/><rect x="-1.6" y="-7.2" width="3.2" height="4" fill="#e8e8e8" transform="translate(1762.5 1017) rotate(135)"/><rect x="-1.6" y="-7.2" width="3.2" height="4" fill="#e8e8e8" transform="translate(1762.5 1017) rotate(180)"/><rect x="-1.6" y="-7.2" width="3.2" height="4" fill="#e8e8e8" transform="translate(1762.5 1017) rotate(225)"/><rect x="-1.6" y="-7.2" width="3.2" height="4" fill="#e8e8e8" transform="translate(1762.5 1017) rotate(270)"/><rect x="-1.6" y="-7.2" width="3.2" height="4" fill="#e8e8e8" transform="translate(1762.5 1017) rotate(315)"/><circle cx="1762.5" cy="1017" r="4" fill="none" stroke="#e8e8e8" stroke-width="2.6"/><path d="M1779 1015 H1785 L1782 1018.5 Z" fill="#e8e8e8"/><path d="M1796 1017.5 H1811 M1803.5 1010 V1025" stroke="#e8e8e8" stroke-width="1.6"/><rect x="1822.5" y="1008.5" width="5" height="5" stroke="#e8e8e8" fill="none"/><circle cx="1835" cy="1014" r="3" stroke="#e8e8e8" fill="none"/><path d="M1826 1018 L1830 1025 H1822 Z" stroke="#e8e8e8" fill="none"/><rect x="1848" y="1009" width="12" height="16" fill="#f4f4f4"/><rect x="1848" y="1014" width="12" height="6" fill="#58a8e8"/><rect x="1848" y="1020" width="12" height="5" fill="#f0c050"/><path d="M1852 1010 V1024 M1849 1014 H1859" stroke="#fff" stroke-width="1"/><path d="M1857 1024 L1860 1027 L1865 1021" stroke="#3ca03c" stroke-width="1.8" fill="none"/><rect x="1874.5" y="1011.5" width="14" height="11" stroke="#e8e8e8" fill="none"/><path d="M1877 1020 L1880.5 1016.5 M1886 1014 L1882.5 1017.5" stroke="#e8e8e8"/><path d="M1876.5 1017.5 V1020.5 H1879.5 Z M1886.5 1016.5 V1013.5 H1883.5 Z" fill="#e8e8e8"/><path d="M1899 1011 H1914 M1899 1017 H1914 M1899 1023 H1914" stroke="#e8e8e8" stroke-width="2"/></svg>
<div class="t" style="left:1719px;top:1009px;font-size:12.5px;color:#f2f2f2;letter-spacing:-.5px;">1:1</div>
<div style="left:1912px;top:173px;width:7px;height:830px;background:#dce8f4;border-left:1px solid #b9c6d6;"></div>
<div class="t" style="left:4px;top:180px;font-size:12px;color:#ececec;letter-spacing:0.110px;">[&minus;][Top][2D Wireframe]</div>
<svg style="left:1848px;top:180px;" width="56" height="16" viewBox="0 0 56 16"><rect x="3" y="8.5" width="10" height="2.6" fill="#f2f2f2"/><rect x="24" y="5.5" width="7" height="6" fill="none" stroke="#f2f2f2" stroke-width="1.8"/><path d="M26.5 4.5 V3 H34 V9 H32.5" stroke="#f2f2f2" fill="none" stroke-width="1.2"/><path d="M43 3.5 L51 11.5 M51 3.5 L43 11.5" stroke="#f2f2f2" stroke-width="2.4"/></svg>
<svg style="left:0px;top:0px;" width="1919" height="1033" viewBox="0 0 1919 1033"><circle cx="1829" cy="279.5" r="53.5" fill="none" stroke="#454a51" stroke-width="14"/><rect x="1803" y="253" width="52" height="52" fill="#b7b7b7"/><rect x="1812.5" y="262.5" width="33" height="33" fill="#a9a9a9"/><text x="1829" y="230.5" font-size="21" font-weight="bold" text-anchor="middle" fill="#b4b4b4" font-family="Liberation Sans">N</text><text x="1829" y="343.5" font-size="21" font-weight="bold" text-anchor="middle" fill="#b4b4b4" font-family="Liberation Sans">S</text><text x="1772.5" y="287" font-size="21" font-weight="bold" text-anchor="middle" fill="#b4b4b4" font-family="Liberation Sans">W</text><text x="1885.5" y="287" font-size="21" font-weight="bold" text-anchor="middle" fill="#b4b4b4" font-family="Liberation Sans">E</text><text x="1829" y="283.5" font-size="12" font-weight="bold" text-anchor="middle" fill="#555" font-family="Liberation Sans" textLength="22" lengthAdjust="spacingAndGlyphs">TOP</text><rect x="1805" y="366.5" width="48" height="16.5" rx="4" fill="#9b9b9b" stroke="#777" stroke-width="1"/><text x="1809" y="378.5" font-size="11" fill="#474747" font-family="Liberation Sans" textLength="24" lengthAdjust="spacingAndGlyphs">WCS</text><path d="M1840 372.5 H1847 L1843.5 377 Z" fill="#b8b8b8"/><rect x="1876.5" y="409.5" width="32" height="212" rx="4" fill="#6b6e71" stroke="#7c7f82" stroke-width="1"/><circle cx="1901.5" cy="415" r="3" stroke="#8b8e90" fill="none"/><path d="M1899.5 413 L1903.5 417 M1903.5 413 L1899.5 417" stroke="#8b8e90" stroke-width=".8"/><circle cx="1892.5" cy="439" r="10.5" stroke="#8b8e90" fill="none" stroke-width="1.6"/><circle cx="1892.5" cy="439" r="6.5" stroke="#8b8e90" fill="none" stroke-width="1.4"/><path d="M1889.5 458 H1895.5 L1892.5 461.5 Z" fill="#555"/><path d="M1884 485 Q1881 478 1884.5 478 L1886 481 V472 H1888 V479 V470 H1890.5 V479 V471 H1893 V480 V474 H1895.5 V484 Q1895.5 490 1892 492 H1887 Z" stroke="#8b8e90" fill="none" stroke-width="1.2"/><path d="M1881 499 L1895 514 M1895 499 L1881 514" stroke="#8b8e90" stroke-width="1.4"/><circle cx="1896" cy="514" r="4" stroke="#8b8e90" fill="#6b6e71" stroke-width="1.4"/><path d="M1899 517 L1902 520" stroke="#8b8e90" stroke-width="1.6"/><path d="M1889.5 527 H1895.5 L1892.5 530.5 Z" fill="#555"/><path d="M1892.5 537 V559 M1892.5 536 L1888.5 541 H1896.5 Z" stroke="#8b8e90" fill="none" stroke-width="1.3"/><ellipse cx="1892.5" cy="550" rx="10" ry="4.5" stroke="#8b8e90" fill="none" stroke-width="1.3"/><path d="M1889.5 566 H1895.5 L1892.5 569.5 Z" fill="#555"/><rect x="1881.0" y="578.5" width="6" height="5" stroke="#8b8e90" fill="none"/><rect x="1888.5" y="578.5" width="6" height="5" stroke="#8b8e90" fill="none"/><rect x="1896.0" y="578.5" width="6" height="5" stroke="#8b8e90" fill="none"/><rect x="1881.5" y="588.5" width="16" height="12" stroke="#8b8e90" fill="none" stroke-width="1.2"/><path d="M1886 591 V598 L1893 594.5 Z" fill="#8b8e90"/><circle cx="1901.5" cy="614.5" r="3" stroke="#8b8e90" fill="none"/><path d="M1900 613.5 H1903 L1901.5 616 Z" fill="#8b8e90"/><path d="M20.5 932 V982 M20.5 982.5 H71" stroke="#f0f0f0" stroke-width="1"/><rect x="16.5" y="977.5" width="9" height="9" stroke="#f0f0f0" fill="none"/><path d="M22 915.5 L28.5 922.5 L35 915.5 M28.5 922.5 V928" stroke="#f0f0f0" fill="none" stroke-width="1"/><path d="M75 968 L88 981 M88 968 L75 981" stroke="#f0f0f0" stroke-width="1"/></svg>
<div style="left:463px;top:918px;width:788px;height:15px;background:rgba(98,101,104,.88);color:#ededed;font-family:'Liberation Mono',monospace;font-size:11.667px;white-space:pre;line-height:17px;padding-left:2px;overflow:hidden;">Autodesk DWG.  This file is a TrustedDWG last saved by an Autodesk application or Autodesk licensed application.</div>
<div style="left:463px;top:938px;width:60px;height:15px;background:rgba(98,101,104,.88);color:#ededed;font-family:'Liberation Mono',monospace;font-size:11.667px;white-space:pre;line-height:17px;padding-left:2px;overflow:hidden;border-radius:1px;">Command:</div>
<div style="left:463px;top:958px;width:60px;height:15px;background:rgba(98,101,104,.88);color:#ededed;font-family:'Liberation Mono',monospace;font-size:11.667px;white-space:pre;line-height:17px;padding-left:2px;overflow:hidden;color:#fff;">Command:</div>
<div style="left:405px;top:977px;width:53px;height:25px;background:rgba(66,66,66,.86);border-radius:3px 0 0 3px;"></div>
<div style="left:458px;top:977px;width:1059px;height:25px;background:rgba(255,255,255,.70);border-radius:0 2px 2px 0;"></div>
<svg style="left:405px;top:977px;" width="1112" height="25" viewBox="0 0 1112 25"><rect x="3" y="4" width="1.3" height="1.3" fill="#9a9a9a"/><rect x="6" y="4" width="1.3" height="1.3" fill="#9a9a9a"/><rect x="3" y="7" width="1.3" height="1.3" fill="#9a9a9a"/><rect x="6" y="7" width="1.3" height="1.3" fill="#9a9a9a"/><rect x="3" y="10" width="1.3" height="1.3" fill="#9a9a9a"/><rect x="6" y="10" width="1.3" height="1.3" fill="#9a9a9a"/><rect x="3" y="13" width="1.3" height="1.3" fill="#9a9a9a"/><rect x="6" y="13" width="1.3" height="1.3" fill="#9a9a9a"/><rect x="3" y="16" width="1.3" height="1.3" fill="#9a9a9a"/><rect x="6" y="16" width="1.3" height="1.3" fill="#9a9a9a"/><rect x="3" y="19" width="1.3" height="1.3" fill="#9a9a9a"/><rect x="6" y="19" width="1.3" height="1.3" fill="#9a9a9a"/><path d="M14.5 8.5 L21.5 15.5 M21.5 8.5 L14.5 15.5" stroke="#e8e8e8" stroke-width="1.8"/><path d="M36 6.5 Q39.5 4.5 42 7.5 L39 8 L38.5 10.5 L41.5 11 Q38.5 13.5 36 12 Z" fill="#e8e8e8" transform="rotate(-10 40 10)"/><path d="M41 11.5 L48 18.5" stroke="#e8e8e8" stroke-width="2.6" stroke-linecap="round"/><rect x="57.5" y="5.5" width="14" height="13" rx="1.5" fill="#ddd" stroke="#555"/><path d="M60.5 9 L64 12 L60.5 15 M65 15.5 H69" stroke="#333" fill="none" stroke-width="1.3"/><path d="M76 10 H81 L78.5 13 Z" fill="#555"/><path d="M1102 14.5 H1109 L1105.5 10 Z" fill="#222"/></svg>
<div class="t" style="left:494px;top:982px;font-size:11.667px;color:#8a8a8a;font-family:'Liberation Mono',monospace;font-style:italic;">Type a command</div>
<svg style="left:0px;top:0px;" width="1919" height="1033" viewBox="0 0 1919 1033"><path d="M1544.5 903 H1904 Q1918 903 1918 917 V983 Q1918 997 1904 997 H1829.5 L1843.5 1017 L1809 997 H1544.5 Q1530.5 997 1530.5 983 V917 Q1530.5 903 1544.5 903 Z" fill="#ffffe1" stroke="#1c1c1c" stroke-width="1"/><rect x="1896.5" y="912.5" width="15" height="15" fill="#fff" stroke="#8a8a8a"/><path d="M1900.5 916.5 L1907.5 923.5 M1907.5 916.5 L1900.5 923.5" stroke="#111" stroke-width="1.8"/></svg>
<div class="t" style="left:1549px;top:913px;font-size:12px;color:#111;letter-spacing:-0.129px;font-weight:bold;">3D Display Performance Notification</div>
<div class="t" style="left:1545.5px;top:934.5px;font-size:12px;color:#111;letter-spacing:-0.102px;">Enhanced 3D performance is not available for the current visual style.</div>
<div class="t" style="left:1545.5px;top:949.5px;font-size:12px;color:#111;letter-spacing:-0.188px;">The required settings are listed here:</div>
<div class="t" style="left:1545.5px;top:971px;font-size:12px;color:#0000e6;letter-spacing:-0.652px;text-decoration:underline;">VISUALSTYLES Command</div>
</body></html>
